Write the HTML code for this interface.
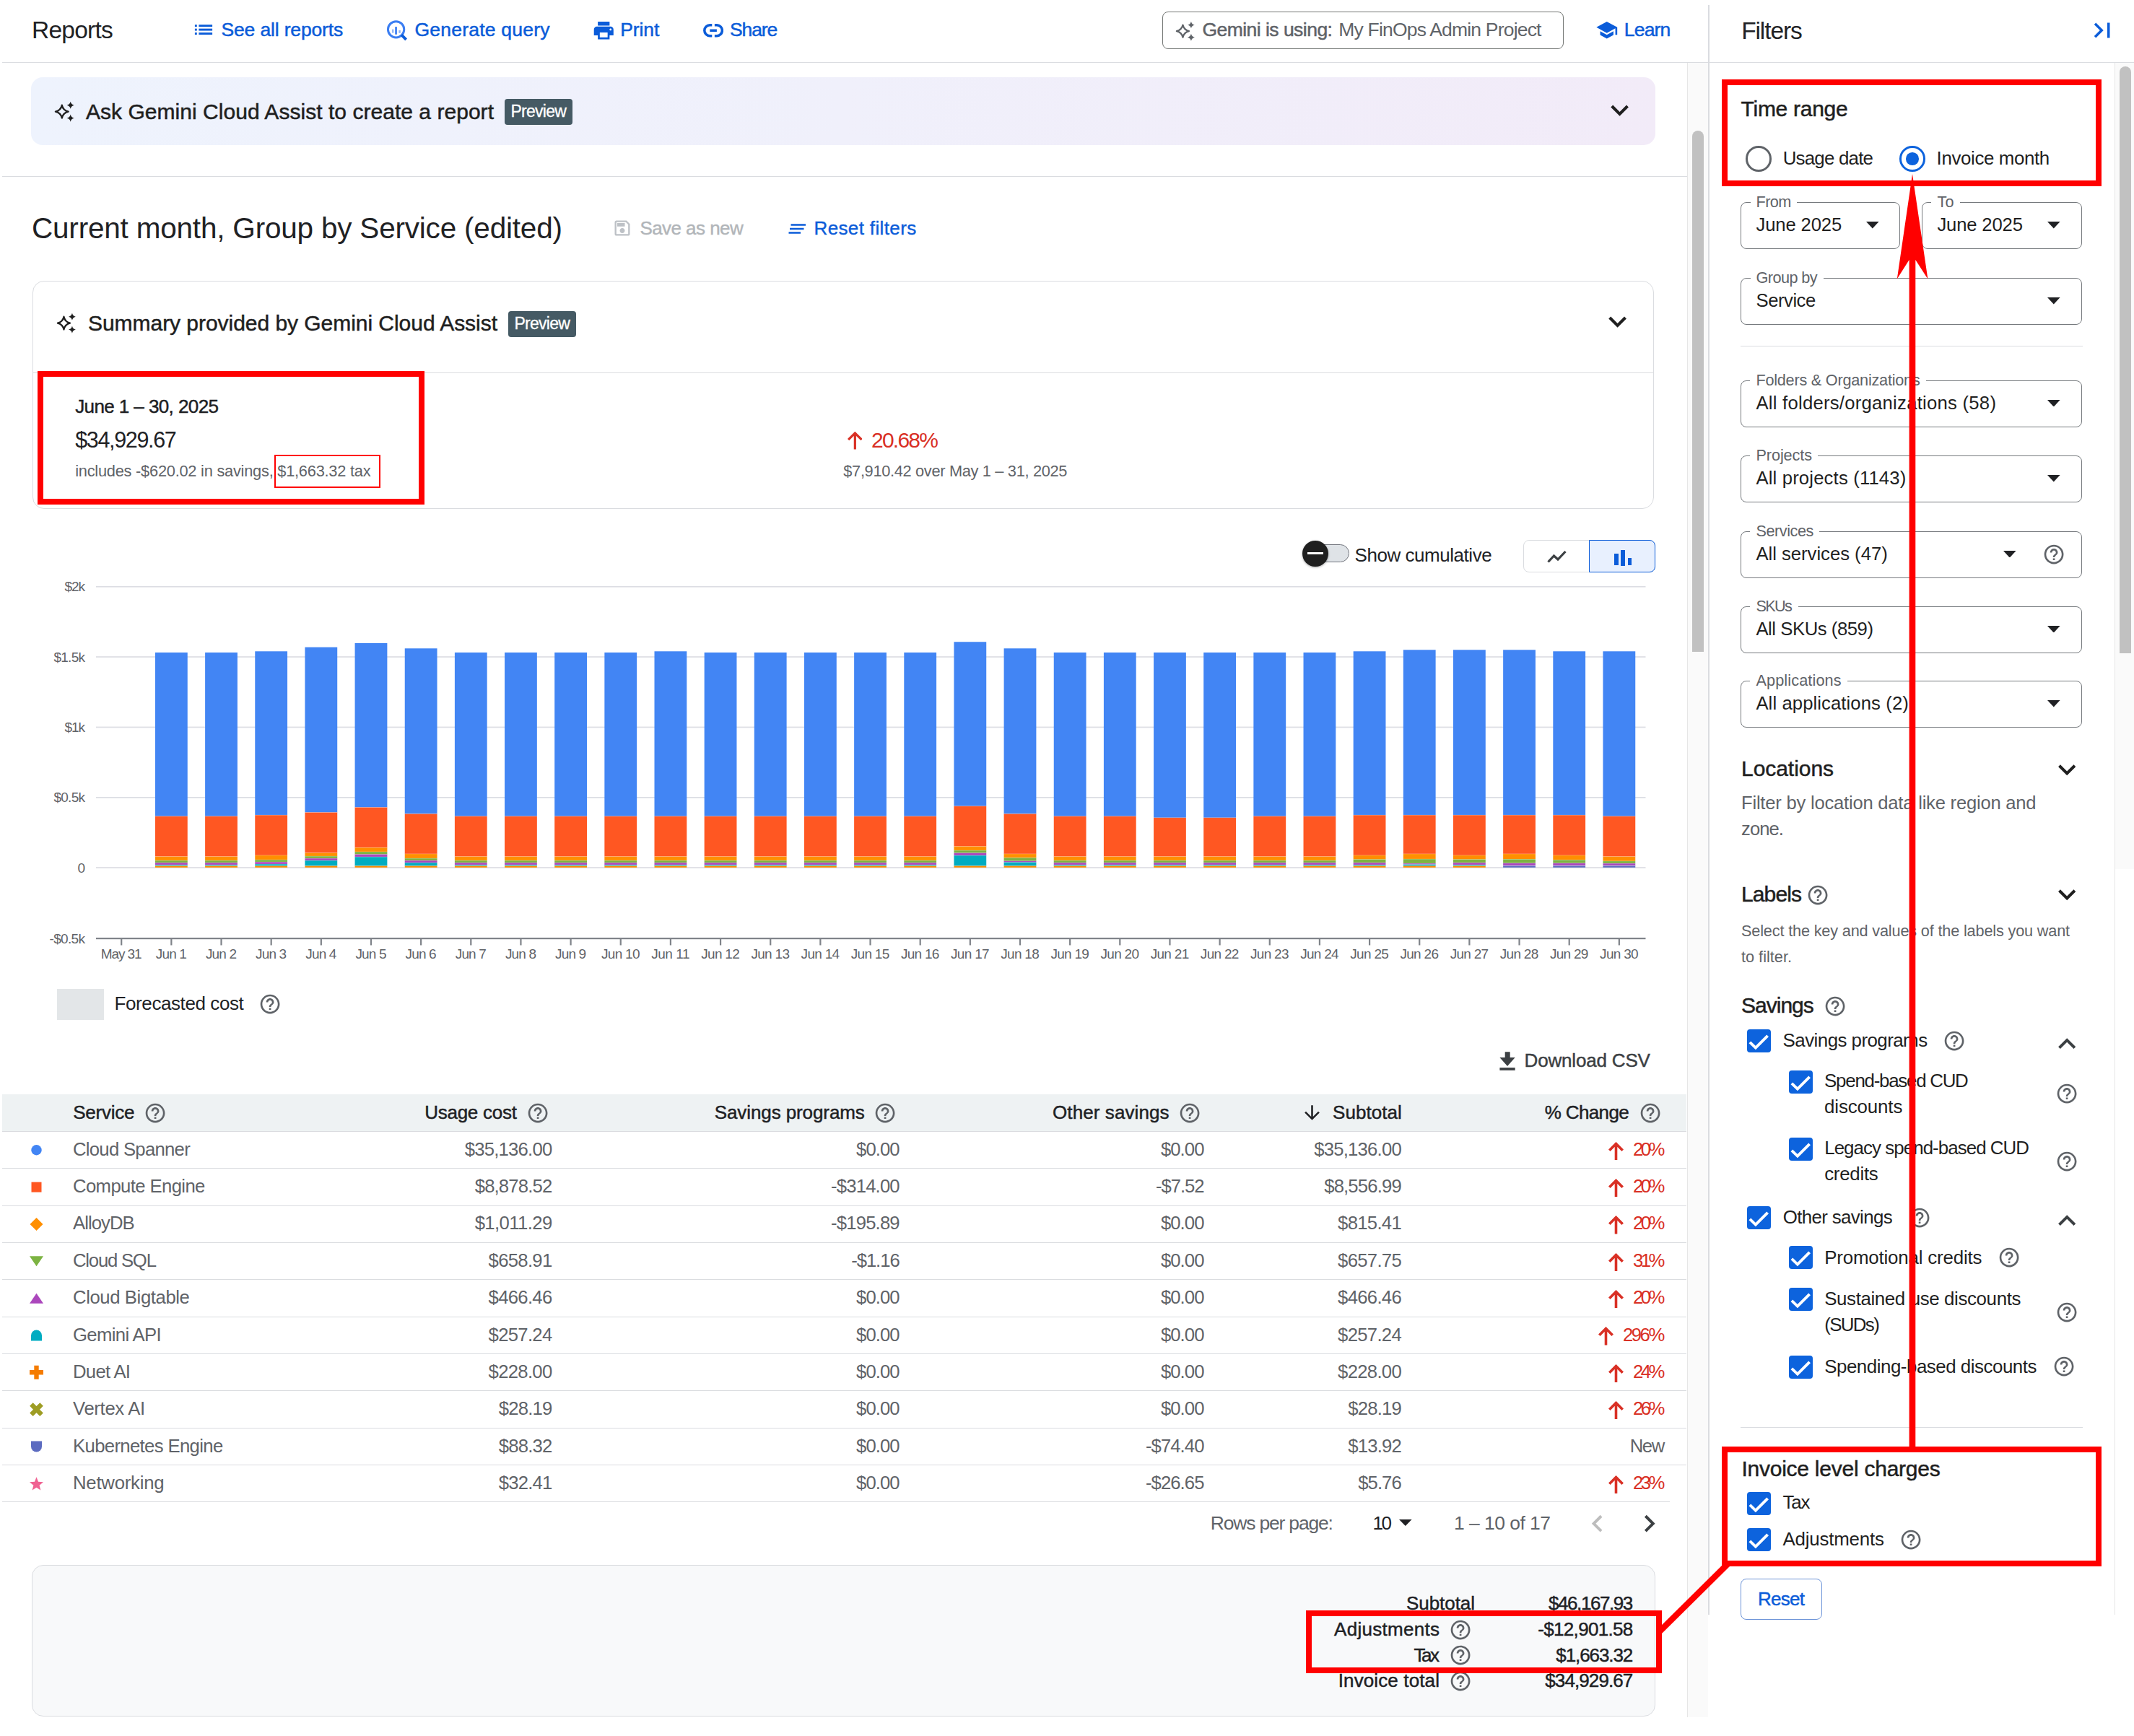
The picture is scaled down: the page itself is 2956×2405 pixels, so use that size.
<!DOCTYPE html><html><head><meta charset="utf-8"><title>Reports</title><style>*{margin:0;padding:0;box-sizing:border-box}html,body{width:2956px;height:2405px;overflow:hidden;background:#fff}body{position:relative;font-family:"Liberation Sans",sans-serif}.t{position:absolute;white-space:nowrap}.a{position:absolute;display:block}</style></head><body><div class="a" style="left:3.00px;top:86.00px;width:2953.00px;height:1.00px;background:#dadce0;"></div>
<div class="a" style="left:2366.00px;top:7.00px;width:2.00px;height:2230.00px;background:#dadce0;"></div>
<div class="t" style="left:44.00px;top:25px;font-size:33.5px;line-height:33.5px;color:#202124;letter-spacing:-0.756px;">Reports</div>
<svg class="a" style="left:0.00px;top:0.00px;width:2956.00px;height:100.00px;" viewBox="0 0 2956 100" preserveAspectRatio="none"><rect x="269.9" y="34.2" width="2.9" height="2.9" fill="#0b5cd9"/><rect x="275.4" y="34.2" width="18.7" height="2.9" fill="#0b5cd9"/><rect x="269.9" y="39.65" width="2.9" height="2.9" fill="#0b5cd9"/><rect x="275.4" y="39.65" width="18.7" height="2.9" fill="#0b5cd9"/><rect x="269.9" y="45.1" width="2.9" height="2.9" fill="#0b5cd9"/><rect x="275.4" y="45.1" width="18.7" height="2.9" fill="#0b5cd9"/></svg>
<div class="t" style="left:306.50px;top:28px;font-size:26.5px;line-height:26.5px;color:#0b5cd9;letter-spacing:-0.154px;-webkit-text-stroke:0.5px #0b5cd9;">See all reports</div>
<svg class="a" style="left:0.00px;top:0.00px;width:2956.00px;height:100.00px;" viewBox="0 0 2956 100" preserveAspectRatio="none"><circle cx="548.6" cy="40.8" r="11.15" fill="none" stroke="#3b7ef2" stroke-width="3"/><path d="M556.2 48.4 L562.6 54.8" stroke="#0b5cd9" stroke-width="4"/><rect x="547.2" y="37.1" width="2.7" height="10.6" fill="#3b7ef2"/><rect x="543.1" y="40.6" width="2.2" height="5" fill="#8db3f5"/><rect x="552.4" y="42" width="2.4" height="3.8" fill="#8db3f5"/></svg>
<div class="t" style="left:574.50px;top:28px;font-size:26.5px;line-height:26.5px;color:#0b5cd9;letter-spacing:0.217px;-webkit-text-stroke:0.5px #0b5cd9;">Generate query</div>
<svg class="a" style="left:820.00px;top:25.70px;width:32.50px;height:32.50px" viewBox="0 0 24 24"><path fill="#0b5cd9" d="M19 8H5c-1.66 0-3 1.34-3 3v6h4v4h12v-4h4v-6c0-1.66-1.34-3-3-3zm-3 11H8v-5h8v5zm3-7c-.55 0-1-.45-1-1s.45-1 1-1 1 .45 1 1-.45 1-1 1zm-1-9H6v4h12V3z"/></svg>
<div class="t" style="left:859.30px;top:28px;font-size:26.5px;line-height:26.5px;color:#0b5cd9;letter-spacing:-0.114px;-webkit-text-stroke:0.5px #0b5cd9;">Print</div>
<svg class="a" style="left:974.00px;top:33.00px;width:28.20px;height:18.50px;" viewBox="0 0 28.2 18.5" preserveAspectRatio="none"><path d="M12.3 1.8H9.25A7.45 7.45 0 0 0 9.25 16.7H12.3M15.9 1.8H18.95A7.45 7.45 0 0 1 18.95 16.7H15.9M9.3 9.25H18.9" fill="none" stroke="#0b5cd9" stroke-width="3.5"/></svg>
<div class="t" style="left:1011.00px;top:28px;font-size:26.5px;line-height:26.5px;color:#0b5cd9;letter-spacing:-1.122px;-webkit-text-stroke:0.5px #0b5cd9;">Share</div>
<div class="a" style="left:1609.50px;top:16.00px;width:556.00px;height:51.50px;border:1.5px solid #747775;border-radius:8px;"></div>
<svg class="a" style="left:1628.60px;top:30.00px;width:27.00px;height:27.00px;overflow:visible" viewBox="0 0 28 28" preserveAspectRatio="none"><path fill="none" stroke="#5f6368" stroke-width="2.3" stroke-linejoin="round" d="M9.8 4.699999999999999 Q11.4 12.0 18.700000000000003 13.6 Q11.4 15.2 9.8 22.5 Q8.200000000000001 15.2 0.9000000000000004 13.6 Q8.200000000000001 12.0 9.8 4.699999999999999Z"/><path fill="#5f6368" d="M21.7 -0.2999999999999998 Q22.599999999999998 3.8000000000000003 26.7 4.7 Q22.599999999999998 5.6000000000000005 21.7 9.7 Q20.8 5.6000000000000005 16.7 4.7 Q20.8 3.8000000000000003 21.7 -0.2999999999999998Z"/><path fill="#5f6368" d="M21.7 17.400000000000002 Q22.599999999999998 21.700000000000003 26.9 22.6 Q22.599999999999998 23.5 21.7 27.8 Q20.8 23.5 16.5 22.6 Q20.8 21.700000000000003 21.7 17.400000000000002Z"/></svg>
<div class="t" style="left:1665.40px;top:28px;font-size:26.5px;line-height:26.5px;color:#5f6368;letter-spacing:-0.530px;-webkit-text-stroke:0.5px #5f6368;">Gemini is using:</div>
<div class="t" style="left:1854.30px;top:28px;font-size:26.5px;line-height:26.5px;color:#5f6368;letter-spacing:-0.808px;">My FinOps Admin Project</div>
<svg class="a" style="left:2209.70px;top:25.70px;width:31.50px;height:31.50px" viewBox="0 0 24 24"><path fill="#0b5cd9" d="M5 13.18v4L12 21l7-3.82v-4L12 17l-7-3.82zM12 3L1 9l11 6 9-4.91V17h2V9L12 3z"/></svg>
<div class="t" style="left:2249.80px;top:28px;font-size:26.5px;line-height:26.5px;color:#0b5cd9;letter-spacing:-0.818px;-webkit-text-stroke:0.5px #0b5cd9;">Learn</div>
<div class="t" style="left:2412.20px;top:26px;font-size:33.5px;line-height:33.5px;color:#202124;letter-spacing:-1.117px;">Filters</div>
<svg class="a" style="left:2890.90px;top:20.50px;width:42.00px;height:42.00px" viewBox="0 0 24 24"><path fill="#0b5cd9" d="M5.59 7.41L10.18 12l-4.59 4.59L7 18l6-6-6-6zM16 6h2v12h-2z"/></svg>
<div class="a" style="left:2337.00px;top:87.00px;width:29.00px;height:2292.00px;background:#fafafa;border-left:1.5px solid #e6e6e6;"></div>
<div class="a" style="left:2344.00px;top:180.50px;width:16.00px;height:722.50px;background:#c1c1c1;border-radius:8px 8px 0 0;"></div>
<div class="a" style="left:2928.50px;top:87.00px;width:27.50px;height:1117.00px;background:#fafafa;"></div>
<div class="a" style="left:2928.50px;top:87.00px;width:1.50px;height:2150.00px;background:#e6e6e6;"></div>
<div class="a" style="left:2936.00px;top:92.00px;width:16.00px;height:812.50px;background:#c1c1c1;border-radius:8px 8px 0 0;"></div>
<div class="a" style="left:43.00px;top:107.00px;width:2249.50px;height:94.00px;border-radius:16px;background:linear-gradient(90deg,#eef3fd 0%,#f0f0fb 50%,#f2ebf8 100%);"></div>
<svg class="a" style="left:75.70px;top:140.50px;width:28.00px;height:28.00px;overflow:visible" viewBox="0 0 28 28" preserveAspectRatio="none"><path fill="none" stroke="#1f1f1f" stroke-width="2.3" stroke-linejoin="round" d="M9.8 4.699999999999999 Q11.4 12.0 18.700000000000003 13.6 Q11.4 15.2 9.8 22.5 Q8.200000000000001 15.2 0.9000000000000004 13.6 Q8.200000000000001 12.0 9.8 4.699999999999999Z"/><path fill="#1f1f1f" d="M21.7 -0.2999999999999998 Q22.599999999999998 3.8000000000000003 26.7 4.7 Q22.599999999999998 5.6000000000000005 21.7 9.7 Q20.8 5.6000000000000005 16.7 4.7 Q20.8 3.8000000000000003 21.7 -0.2999999999999998Z"/><path fill="#1f1f1f" d="M21.7 17.400000000000002 Q22.599999999999998 21.700000000000003 26.9 22.6 Q22.599999999999998 23.5 21.7 27.8 Q20.8 23.5 16.5 22.6 Q20.8 21.700000000000003 21.7 17.400000000000002Z"/></svg>
<div class="t" style="left:119.00px;top:140px;font-size:30px;line-height:30px;color:#1f1f1f;letter-spacing:0.034px;-webkit-text-stroke:0.5px #1f1f1f;">Ask Gemini Cloud Assist to create a report</div>
<div class="a" style="left:699.00px;top:137.00px;width:93.70px;height:35.60px;background:#455a64;border-radius:4px;"></div>
<div class="t" style="left:707.50px;top:143px;font-size:23px;line-height:23px;color:#fff;letter-spacing:-0.730px;-webkit-text-stroke:0.3px #fff;">Preview</div>
<svg class="a" style="left:2218.70px;top:128.40px;width:49.20px;height:49.20px" viewBox="0 0 24 24"><path fill="#1f1f1f" d="M16.59 8.59L12 13.17 7.41 8.59 6 10l6 6 6-6z"/></svg>
<div class="a" style="left:3.00px;top:244.00px;width:2334.00px;height:1.00px;background:#dadce0;"></div>
<div class="t" style="left:44.00px;top:296px;font-size:40.5px;line-height:40.5px;color:#202124;letter-spacing:-0.202px;">Current month, Group by Service (edited)</div>
<svg class="a" style="left:848.00px;top:301.50px;width:28.00px;height:28.00px" viewBox="0 0 24 24"><path fill="#bdc1c6" d="M17 3H5c-1.11 0-2 .9-2 2v14c0 1.1.89 2 2 2h14c1.1 0 2-.9 2-2V7l-4-4zm2 16H5V5h11.17L19 7.83V19zm-7-7c-1.66 0-3 1.34-3 3s1.34 3 3 3 3-1.34 3-3-1.34-3-3-3zM6 6h9v4H6z"/></svg>
<div class="t" style="left:886.40px;top:303px;font-size:26px;line-height:26px;color:#b1b5b9;letter-spacing:-0.551px;-webkit-text-stroke:0.4px #b1b5b9;">Save as new</div>
<svg class="a" style="left:1092.00px;top:310.00px;width:25.00px;height:14.00px;" viewBox="0 0 25 14" preserveAspectRatio="none"><path d="M3.5 1.5H24M2 7H21.5M0.5 12.5H17" stroke="#0b5cd9" stroke-width="2.6"/></svg>
<div class="t" style="left:1127.50px;top:303px;font-size:26px;line-height:26px;color:#0b5cd9;letter-spacing:0.368px;-webkit-text-stroke:0.4px #0b5cd9;">Reset filters</div>
<div class="a" style="left:45.00px;top:388.50px;width:2246.00px;height:316.50px;border:1.5px solid #dadce0;border-radius:16px;"></div>
<svg class="a" style="left:78.70px;top:433.50px;width:27.00px;height:28.00px;overflow:visible" viewBox="0 0 28 28" preserveAspectRatio="none"><path fill="none" stroke="#1f1f1f" stroke-width="2.3" stroke-linejoin="round" d="M9.8 4.699999999999999 Q11.4 12.0 18.700000000000003 13.6 Q11.4 15.2 9.8 22.5 Q8.200000000000001 15.2 0.9000000000000004 13.6 Q8.200000000000001 12.0 9.8 4.699999999999999Z"/><path fill="#1f1f1f" d="M21.7 -0.2999999999999998 Q22.599999999999998 3.8000000000000003 26.7 4.7 Q22.599999999999998 5.6000000000000005 21.7 9.7 Q20.8 5.6000000000000005 16.7 4.7 Q20.8 3.8000000000000003 21.7 -0.2999999999999998Z"/><path fill="#1f1f1f" d="M21.7 17.400000000000002 Q22.599999999999998 21.700000000000003 26.9 22.6 Q22.599999999999998 23.5 21.7 27.8 Q20.8 23.5 16.5 22.6 Q20.8 21.700000000000003 21.7 17.400000000000002Z"/></svg>
<div class="t" style="left:122.00px;top:433px;font-size:30px;line-height:30px;color:#1f1f1f;letter-spacing:-0.041px;-webkit-text-stroke:0.5px #1f1f1f;">Summary provided by Gemini Cloud Assist</div>
<div class="a" style="left:704.00px;top:431.00px;width:94.00px;height:35.80px;background:#455a64;border-radius:4px;"></div>
<div class="t" style="left:712.50px;top:437px;font-size:23px;line-height:23px;color:#fff;letter-spacing:-0.730px;-webkit-text-stroke:0.3px #fff;">Preview</div>
<svg class="a" style="left:2215.70px;top:421.00px;width:49.20px;height:49.20px" viewBox="0 0 24 24"><path fill="#1f1f1f" d="M16.59 8.59L12 13.17 7.41 8.59 6 10l6 6 6-6z"/></svg>
<div class="a" style="left:46.00px;top:515.50px;width:2244.00px;height:1.50px;background:#dadce0;"></div>
<div class="t" style="left:104.20px;top:550px;font-size:26px;line-height:26px;color:#202124;letter-spacing:-0.587px;-webkit-text-stroke:0.45px #202124;">June 1 – 30, 2025</div>
<div class="t" style="left:104.20px;top:594px;font-size:30.5px;line-height:30.5px;color:#202124;letter-spacing:-1.339px;">$34,929.67</div>
<div class="t" style="left:104.20px;top:642px;font-size:21.8px;line-height:21.8px;color:#5f6368;letter-spacing:-0.236px;">includes -$620.02 in savings, $1,663.32 tax</div>
<div class="a" style="left:52.00px;top:514.00px;width:536.00px;height:185.00px;border:8px solid #ff0000;"></div>
<div class="a" style="left:380.00px;top:630.00px;width:147.00px;height:45.50px;border:2px solid #ff0000;"></div>
<svg class="a" style="left:1173.70px;top:598.30px;width:20.70px;height:24.40px;" viewBox="0 0 20.7 24.4" preserveAspectRatio="none"><path d="M10.35 24.4V2M1.1 11.2L10.35 2L19.6 11.2" fill="none" stroke="#d93025" stroke-width="3.2"/></svg>
<div class="t" style="left:1207.00px;top:595px;font-size:30px;line-height:30px;color:#d93025;letter-spacing:-1.755px;">20.68%</div>
<div class="t" style="left:1168.30px;top:642px;font-size:21.8px;line-height:21.8px;color:#5f6368;letter-spacing:-0.326px;">$7,910.42 over May 1 – 31, 2025</div>
<div class="a" style="left:1818.70px;top:754.00px;width:50.30px;height:25.00px;background:#dfe3e7;border:1.5px solid #74777f;border-radius:13px;"></div>
<div class="a" style="left:1803.90px;top:748.90px;width:35.80px;height:35.80px;background:#1f1f1f;border-radius:50%;box-shadow:0 1px 3px rgba(0,0,0,.35);"></div>
<div class="a" style="left:1811.00px;top:765.30px;width:22.00px;height:3.20px;background:#fff;"></div>
<div class="t" style="left:1876.50px;top:756px;font-size:26px;line-height:26px;color:#202124;letter-spacing:-0.454px;">Show cumulative</div>
<div class="a" style="left:2110.00px;top:748.00px;width:183.00px;height:44.50px;border:1.5px solid #dadce0;border-radius:8px;"></div>
<div class="a" style="left:2200.50px;top:748.00px;width:92.50px;height:44.50px;border:1.5px solid #0b5cd9;border-radius:0 8px 8px 0;background:#e8f0fe;"></div>
<svg class="a" style="left:2143.00px;top:762.00px;width:27.00px;height:18.00px;" viewBox="0 0 27 18" preserveAspectRatio="none"><path d="M1.5 16.5 L9.5 8 L15 13 L25.5 2" fill="none" stroke="#3c4043" stroke-width="3.2"/></svg>
<div class="a" style="left:2236.40px;top:767.30px;width:5.30px;height:16.20px;background:#0b5cd9;"></div>
<div class="a" style="left:2245.30px;top:762.00px;width:5.50px;height:21.50px;background:#0b5cd9;"></div>
<div class="a" style="left:2254.80px;top:772.80px;width:5.50px;height:10.70px;background:#0b5cd9;"></div>
<svg class="a" style="left:0;top:0;width:2956px;height:2405px;pointer-events:none" viewBox="0 0 2956 2405"><rect x="133" y="811.90" width="2146.5" height="1.7" fill="#dcdde3"/><rect x="133" y="909.20" width="2146.5" height="1.7" fill="#dcdde3"/><rect x="133" y="1006.60" width="2146.5" height="1.7" fill="#dcdde3"/><rect x="133" y="1104.00" width="2146.5" height="1.7" fill="#dcdde3"/><rect x="133" y="1201.20" width="2146.5" height="1.7" fill="#dcdde3"/><rect x="133" y="1299" width="2146.5" height="2.2" fill="#7f8389"/><rect x="167.10" y="1300" width="2.2" height="9.5" fill="#7f8389"/><rect x="236.25" y="1300" width="2.2" height="9.5" fill="#7f8389"/><rect x="305.41" y="1300" width="2.2" height="9.5" fill="#7f8389"/><rect x="374.56" y="1300" width="2.2" height="9.5" fill="#7f8389"/><rect x="443.72" y="1300" width="2.2" height="9.5" fill="#7f8389"/><rect x="512.87" y="1300" width="2.2" height="9.5" fill="#7f8389"/><rect x="582.03" y="1300" width="2.2" height="9.5" fill="#7f8389"/><rect x="651.19" y="1300" width="2.2" height="9.5" fill="#7f8389"/><rect x="720.34" y="1300" width="2.2" height="9.5" fill="#7f8389"/><rect x="789.50" y="1300" width="2.2" height="9.5" fill="#7f8389"/><rect x="858.65" y="1300" width="2.2" height="9.5" fill="#7f8389"/><rect x="927.80" y="1300" width="2.2" height="9.5" fill="#7f8389"/><rect x="996.96" y="1300" width="2.2" height="9.5" fill="#7f8389"/><rect x="1066.12" y="1300" width="2.2" height="9.5" fill="#7f8389"/><rect x="1135.27" y="1300" width="2.2" height="9.5" fill="#7f8389"/><rect x="1204.43" y="1300" width="2.2" height="9.5" fill="#7f8389"/><rect x="1273.58" y="1300" width="2.2" height="9.5" fill="#7f8389"/><rect x="1342.74" y="1300" width="2.2" height="9.5" fill="#7f8389"/><rect x="1411.89" y="1300" width="2.2" height="9.5" fill="#7f8389"/><rect x="1481.05" y="1300" width="2.2" height="9.5" fill="#7f8389"/><rect x="1550.20" y="1300" width="2.2" height="9.5" fill="#7f8389"/><rect x="1619.36" y="1300" width="2.2" height="9.5" fill="#7f8389"/><rect x="1688.51" y="1300" width="2.2" height="9.5" fill="#7f8389"/><rect x="1757.67" y="1300" width="2.2" height="9.5" fill="#7f8389"/><rect x="1826.82" y="1300" width="2.2" height="9.5" fill="#7f8389"/><rect x="1895.98" y="1300" width="2.2" height="9.5" fill="#7f8389"/><rect x="1965.13" y="1300" width="2.2" height="9.5" fill="#7f8389"/><rect x="2034.29" y="1300" width="2.2" height="9.5" fill="#7f8389"/><rect x="2103.44" y="1300" width="2.2" height="9.5" fill="#7f8389"/><rect x="2172.60" y="1300" width="2.2" height="9.5" fill="#7f8389"/><rect x="2241.75" y="1300" width="2.2" height="9.5" fill="#7f8389"/><rect x="214.95" y="903.96" width="44.8" height="226.86" fill="#4285f4"/><rect x="214.95" y="1130.82" width="44.8" height="55.80" fill="#ff5722"/><rect x="214.95" y="1186.62" width="44.8" height="5.48" fill="#ff8f00"/><rect x="214.95" y="1192.10" width="44.8" height="3.00" fill="#7cb342"/><rect x="214.95" y="1195.10" width="44.8" height="3.00" fill="#ab47bc"/><rect x="214.95" y="1198.10" width="44.8" height="1.50" fill="#00acc1"/><rect x="214.95" y="1199.60" width="44.8" height="2.20" fill="#fb8c00"/><rect x="214.95" y="1130.47" width="44.8" height="0.7" fill="rgba(255,255,255,.3)"/><rect x="214.95" y="1186.27" width="44.8" height="0.7" fill="rgba(255,255,255,.3)"/><rect x="214.95" y="1191.75" width="44.8" height="0.7" fill="rgba(255,255,255,.3)"/><rect x="214.95" y="1194.75" width="44.8" height="0.7" fill="rgba(255,255,255,.3)"/><rect x="214.95" y="1197.75" width="44.8" height="0.7" fill="rgba(255,255,255,.3)"/><rect x="214.95" y="1199.25" width="44.8" height="0.7" fill="rgba(255,255,255,.3)"/><rect x="284.11" y="903.96" width="44.8" height="226.86" fill="#4285f4"/><rect x="284.11" y="1130.82" width="44.8" height="55.80" fill="#ff5722"/><rect x="284.11" y="1186.62" width="44.8" height="5.48" fill="#ff8f00"/><rect x="284.11" y="1192.10" width="44.8" height="3.00" fill="#7cb342"/><rect x="284.11" y="1195.10" width="44.8" height="3.00" fill="#ab47bc"/><rect x="284.11" y="1198.10" width="44.8" height="1.50" fill="#00acc1"/><rect x="284.11" y="1199.60" width="44.8" height="2.20" fill="#fb8c00"/><rect x="284.11" y="1130.47" width="44.8" height="0.7" fill="rgba(255,255,255,.3)"/><rect x="284.11" y="1186.27" width="44.8" height="0.7" fill="rgba(255,255,255,.3)"/><rect x="284.11" y="1191.75" width="44.8" height="0.7" fill="rgba(255,255,255,.3)"/><rect x="284.11" y="1194.75" width="44.8" height="0.7" fill="rgba(255,255,255,.3)"/><rect x="284.11" y="1197.75" width="44.8" height="0.7" fill="rgba(255,255,255,.3)"/><rect x="284.11" y="1199.25" width="44.8" height="0.7" fill="rgba(255,255,255,.3)"/><rect x="353.26" y="902.29" width="44.8" height="226.86" fill="#4285f4"/><rect x="353.26" y="1129.15" width="44.8" height="55.80" fill="#ff5722"/><rect x="353.26" y="1184.94" width="44.8" height="6.16" fill="#ff8f00"/><rect x="353.26" y="1191.10" width="44.8" height="3.00" fill="#7cb342"/><rect x="353.26" y="1194.10" width="44.8" height="3.00" fill="#ab47bc"/><rect x="353.26" y="1197.10" width="44.8" height="2.50" fill="#00acc1"/><rect x="353.26" y="1199.60" width="44.8" height="2.20" fill="#fb8c00"/><rect x="353.26" y="1128.80" width="44.8" height="0.7" fill="rgba(255,255,255,.3)"/><rect x="353.26" y="1184.59" width="44.8" height="0.7" fill="rgba(255,255,255,.3)"/><rect x="353.26" y="1190.75" width="44.8" height="0.7" fill="rgba(255,255,255,.3)"/><rect x="353.26" y="1193.75" width="44.8" height="0.7" fill="rgba(255,255,255,.3)"/><rect x="353.26" y="1196.75" width="44.8" height="0.7" fill="rgba(255,255,255,.3)"/><rect x="353.26" y="1199.25" width="44.8" height="0.7" fill="rgba(255,255,255,.3)"/><rect x="422.42" y="896.61" width="44.8" height="228.87" fill="#4285f4"/><rect x="422.42" y="1125.47" width="44.8" height="56.13" fill="#ff5722"/><rect x="422.42" y="1181.60" width="44.8" height="4.50" fill="#ff8f00"/><rect x="422.42" y="1186.10" width="44.8" height="3.00" fill="#7cb342"/><rect x="422.42" y="1189.10" width="44.8" height="3.00" fill="#ab47bc"/><rect x="422.42" y="1192.10" width="44.8" height="7.50" fill="#00acc1"/><rect x="422.42" y="1199.60" width="44.8" height="2.20" fill="#fb8c00"/><rect x="422.42" y="1125.12" width="44.8" height="0.7" fill="rgba(255,255,255,.3)"/><rect x="422.42" y="1181.25" width="44.8" height="0.7" fill="rgba(255,255,255,.3)"/><rect x="422.42" y="1185.75" width="44.8" height="0.7" fill="rgba(255,255,255,.3)"/><rect x="422.42" y="1188.75" width="44.8" height="0.7" fill="rgba(255,255,255,.3)"/><rect x="422.42" y="1191.75" width="44.8" height="0.7" fill="rgba(255,255,255,.3)"/><rect x="422.42" y="1199.25" width="44.8" height="0.7" fill="rgba(255,255,255,.3)"/><rect x="491.57" y="890.93" width="44.8" height="227.53" fill="#4285f4"/><rect x="491.57" y="1118.46" width="44.8" height="55.80" fill="#ff5722"/><rect x="491.57" y="1174.25" width="44.8" height="5.75" fill="#ff8f00"/><rect x="491.57" y="1180.00" width="44.8" height="3.60" fill="#7cb342"/><rect x="491.57" y="1183.60" width="44.8" height="3.50" fill="#ab47bc"/><rect x="491.57" y="1187.10" width="44.8" height="12.50" fill="#00acc1"/><rect x="491.57" y="1199.60" width="44.8" height="2.20" fill="#fb8c00"/><rect x="491.57" y="1118.11" width="44.8" height="0.7" fill="rgba(255,255,255,.3)"/><rect x="491.57" y="1173.90" width="44.8" height="0.7" fill="rgba(255,255,255,.3)"/><rect x="491.57" y="1179.65" width="44.8" height="0.7" fill="rgba(255,255,255,.3)"/><rect x="491.57" y="1183.25" width="44.8" height="0.7" fill="rgba(255,255,255,.3)"/><rect x="491.57" y="1186.75" width="44.8" height="0.7" fill="rgba(255,255,255,.3)"/><rect x="491.57" y="1199.25" width="44.8" height="0.7" fill="rgba(255,255,255,.3)"/><rect x="560.73" y="898.28" width="44.8" height="229.20" fill="#4285f4"/><rect x="560.73" y="1127.48" width="44.8" height="55.46" fill="#ff5722"/><rect x="560.73" y="1182.94" width="44.8" height="6.16" fill="#ff8f00"/><rect x="560.73" y="1189.10" width="44.8" height="3.00" fill="#7cb342"/><rect x="560.73" y="1192.10" width="44.8" height="3.00" fill="#ab47bc"/><rect x="560.73" y="1195.10" width="44.8" height="4.50" fill="#00acc1"/><rect x="560.73" y="1199.60" width="44.8" height="2.20" fill="#fb8c00"/><rect x="560.73" y="1127.13" width="44.8" height="0.7" fill="rgba(255,255,255,.3)"/><rect x="560.73" y="1182.59" width="44.8" height="0.7" fill="rgba(255,255,255,.3)"/><rect x="560.73" y="1188.75" width="44.8" height="0.7" fill="rgba(255,255,255,.3)"/><rect x="560.73" y="1191.75" width="44.8" height="0.7" fill="rgba(255,255,255,.3)"/><rect x="560.73" y="1194.75" width="44.8" height="0.7" fill="rgba(255,255,255,.3)"/><rect x="560.73" y="1199.25" width="44.8" height="0.7" fill="rgba(255,255,255,.3)"/><rect x="629.89" y="903.96" width="44.8" height="226.86" fill="#4285f4"/><rect x="629.89" y="1130.82" width="44.8" height="55.80" fill="#ff5722"/><rect x="629.89" y="1186.62" width="44.8" height="5.48" fill="#ff8f00"/><rect x="629.89" y="1192.10" width="44.8" height="3.00" fill="#7cb342"/><rect x="629.89" y="1195.10" width="44.8" height="3.00" fill="#ab47bc"/><rect x="629.89" y="1198.10" width="44.8" height="1.50" fill="#00acc1"/><rect x="629.89" y="1199.60" width="44.8" height="2.20" fill="#fb8c00"/><rect x="629.89" y="1130.47" width="44.8" height="0.7" fill="rgba(255,255,255,.3)"/><rect x="629.89" y="1186.27" width="44.8" height="0.7" fill="rgba(255,255,255,.3)"/><rect x="629.89" y="1191.75" width="44.8" height="0.7" fill="rgba(255,255,255,.3)"/><rect x="629.89" y="1194.75" width="44.8" height="0.7" fill="rgba(255,255,255,.3)"/><rect x="629.89" y="1197.75" width="44.8" height="0.7" fill="rgba(255,255,255,.3)"/><rect x="629.89" y="1199.25" width="44.8" height="0.7" fill="rgba(255,255,255,.3)"/><rect x="699.04" y="903.96" width="44.8" height="226.86" fill="#4285f4"/><rect x="699.04" y="1130.82" width="44.8" height="55.80" fill="#ff5722"/><rect x="699.04" y="1186.62" width="44.8" height="5.48" fill="#ff8f00"/><rect x="699.04" y="1192.10" width="44.8" height="3.00" fill="#7cb342"/><rect x="699.04" y="1195.10" width="44.8" height="3.00" fill="#ab47bc"/><rect x="699.04" y="1198.10" width="44.8" height="1.50" fill="#00acc1"/><rect x="699.04" y="1199.60" width="44.8" height="2.20" fill="#fb8c00"/><rect x="699.04" y="1130.47" width="44.8" height="0.7" fill="rgba(255,255,255,.3)"/><rect x="699.04" y="1186.27" width="44.8" height="0.7" fill="rgba(255,255,255,.3)"/><rect x="699.04" y="1191.75" width="44.8" height="0.7" fill="rgba(255,255,255,.3)"/><rect x="699.04" y="1194.75" width="44.8" height="0.7" fill="rgba(255,255,255,.3)"/><rect x="699.04" y="1197.75" width="44.8" height="0.7" fill="rgba(255,255,255,.3)"/><rect x="699.04" y="1199.25" width="44.8" height="0.7" fill="rgba(255,255,255,.3)"/><rect x="768.20" y="903.96" width="44.8" height="226.86" fill="#4285f4"/><rect x="768.20" y="1130.82" width="44.8" height="55.80" fill="#ff5722"/><rect x="768.20" y="1186.62" width="44.8" height="5.48" fill="#ff8f00"/><rect x="768.20" y="1192.10" width="44.8" height="3.00" fill="#7cb342"/><rect x="768.20" y="1195.10" width="44.8" height="3.00" fill="#ab47bc"/><rect x="768.20" y="1198.10" width="44.8" height="1.50" fill="#00acc1"/><rect x="768.20" y="1199.60" width="44.8" height="2.20" fill="#fb8c00"/><rect x="768.20" y="1130.47" width="44.8" height="0.7" fill="rgba(255,255,255,.3)"/><rect x="768.20" y="1186.27" width="44.8" height="0.7" fill="rgba(255,255,255,.3)"/><rect x="768.20" y="1191.75" width="44.8" height="0.7" fill="rgba(255,255,255,.3)"/><rect x="768.20" y="1194.75" width="44.8" height="0.7" fill="rgba(255,255,255,.3)"/><rect x="768.20" y="1197.75" width="44.8" height="0.7" fill="rgba(255,255,255,.3)"/><rect x="768.20" y="1199.25" width="44.8" height="0.7" fill="rgba(255,255,255,.3)"/><rect x="837.35" y="903.96" width="44.8" height="226.86" fill="#4285f4"/><rect x="837.35" y="1130.82" width="44.8" height="55.80" fill="#ff5722"/><rect x="837.35" y="1186.62" width="44.8" height="5.48" fill="#ff8f00"/><rect x="837.35" y="1192.10" width="44.8" height="3.00" fill="#7cb342"/><rect x="837.35" y="1195.10" width="44.8" height="3.00" fill="#ab47bc"/><rect x="837.35" y="1198.10" width="44.8" height="1.50" fill="#00acc1"/><rect x="837.35" y="1199.60" width="44.8" height="2.20" fill="#fb8c00"/><rect x="837.35" y="1130.47" width="44.8" height="0.7" fill="rgba(255,255,255,.3)"/><rect x="837.35" y="1186.27" width="44.8" height="0.7" fill="rgba(255,255,255,.3)"/><rect x="837.35" y="1191.75" width="44.8" height="0.7" fill="rgba(255,255,255,.3)"/><rect x="837.35" y="1194.75" width="44.8" height="0.7" fill="rgba(255,255,255,.3)"/><rect x="837.35" y="1197.75" width="44.8" height="0.7" fill="rgba(255,255,255,.3)"/><rect x="837.35" y="1199.25" width="44.8" height="0.7" fill="rgba(255,255,255,.3)"/><rect x="906.50" y="902.29" width="44.8" height="228.53" fill="#4285f4"/><rect x="906.50" y="1130.82" width="44.8" height="55.80" fill="#ff5722"/><rect x="906.50" y="1186.62" width="44.8" height="5.48" fill="#ff8f00"/><rect x="906.50" y="1192.10" width="44.8" height="3.00" fill="#7cb342"/><rect x="906.50" y="1195.10" width="44.8" height="3.00" fill="#ab47bc"/><rect x="906.50" y="1198.10" width="44.8" height="1.50" fill="#00acc1"/><rect x="906.50" y="1199.60" width="44.8" height="2.20" fill="#fb8c00"/><rect x="906.50" y="1130.47" width="44.8" height="0.7" fill="rgba(255,255,255,.3)"/><rect x="906.50" y="1186.27" width="44.8" height="0.7" fill="rgba(255,255,255,.3)"/><rect x="906.50" y="1191.75" width="44.8" height="0.7" fill="rgba(255,255,255,.3)"/><rect x="906.50" y="1194.75" width="44.8" height="0.7" fill="rgba(255,255,255,.3)"/><rect x="906.50" y="1197.75" width="44.8" height="0.7" fill="rgba(255,255,255,.3)"/><rect x="906.50" y="1199.25" width="44.8" height="0.7" fill="rgba(255,255,255,.3)"/><rect x="975.66" y="903.96" width="44.8" height="226.86" fill="#4285f4"/><rect x="975.66" y="1130.82" width="44.8" height="55.80" fill="#ff5722"/><rect x="975.66" y="1186.62" width="44.8" height="5.48" fill="#ff8f00"/><rect x="975.66" y="1192.10" width="44.8" height="3.00" fill="#7cb342"/><rect x="975.66" y="1195.10" width="44.8" height="3.00" fill="#ab47bc"/><rect x="975.66" y="1198.10" width="44.8" height="1.50" fill="#00acc1"/><rect x="975.66" y="1199.60" width="44.8" height="2.20" fill="#fb8c00"/><rect x="975.66" y="1130.47" width="44.8" height="0.7" fill="rgba(255,255,255,.3)"/><rect x="975.66" y="1186.27" width="44.8" height="0.7" fill="rgba(255,255,255,.3)"/><rect x="975.66" y="1191.75" width="44.8" height="0.7" fill="rgba(255,255,255,.3)"/><rect x="975.66" y="1194.75" width="44.8" height="0.7" fill="rgba(255,255,255,.3)"/><rect x="975.66" y="1197.75" width="44.8" height="0.7" fill="rgba(255,255,255,.3)"/><rect x="975.66" y="1199.25" width="44.8" height="0.7" fill="rgba(255,255,255,.3)"/><rect x="1044.81" y="903.96" width="44.8" height="226.86" fill="#4285f4"/><rect x="1044.81" y="1130.82" width="44.8" height="55.80" fill="#ff5722"/><rect x="1044.81" y="1186.62" width="44.8" height="5.48" fill="#ff8f00"/><rect x="1044.81" y="1192.10" width="44.8" height="3.00" fill="#7cb342"/><rect x="1044.81" y="1195.10" width="44.8" height="3.00" fill="#ab47bc"/><rect x="1044.81" y="1198.10" width="44.8" height="1.50" fill="#00acc1"/><rect x="1044.81" y="1199.60" width="44.8" height="2.20" fill="#fb8c00"/><rect x="1044.81" y="1130.47" width="44.8" height="0.7" fill="rgba(255,255,255,.3)"/><rect x="1044.81" y="1186.27" width="44.8" height="0.7" fill="rgba(255,255,255,.3)"/><rect x="1044.81" y="1191.75" width="44.8" height="0.7" fill="rgba(255,255,255,.3)"/><rect x="1044.81" y="1194.75" width="44.8" height="0.7" fill="rgba(255,255,255,.3)"/><rect x="1044.81" y="1197.75" width="44.8" height="0.7" fill="rgba(255,255,255,.3)"/><rect x="1044.81" y="1199.25" width="44.8" height="0.7" fill="rgba(255,255,255,.3)"/><rect x="1113.97" y="903.96" width="44.8" height="226.86" fill="#4285f4"/><rect x="1113.97" y="1130.82" width="44.8" height="55.80" fill="#ff5722"/><rect x="1113.97" y="1186.62" width="44.8" height="5.48" fill="#ff8f00"/><rect x="1113.97" y="1192.10" width="44.8" height="3.00" fill="#7cb342"/><rect x="1113.97" y="1195.10" width="44.8" height="3.00" fill="#ab47bc"/><rect x="1113.97" y="1198.10" width="44.8" height="1.50" fill="#00acc1"/><rect x="1113.97" y="1199.60" width="44.8" height="2.20" fill="#fb8c00"/><rect x="1113.97" y="1130.47" width="44.8" height="0.7" fill="rgba(255,255,255,.3)"/><rect x="1113.97" y="1186.27" width="44.8" height="0.7" fill="rgba(255,255,255,.3)"/><rect x="1113.97" y="1191.75" width="44.8" height="0.7" fill="rgba(255,255,255,.3)"/><rect x="1113.97" y="1194.75" width="44.8" height="0.7" fill="rgba(255,255,255,.3)"/><rect x="1113.97" y="1197.75" width="44.8" height="0.7" fill="rgba(255,255,255,.3)"/><rect x="1113.97" y="1199.25" width="44.8" height="0.7" fill="rgba(255,255,255,.3)"/><rect x="1183.12" y="903.96" width="44.8" height="226.86" fill="#4285f4"/><rect x="1183.12" y="1130.82" width="44.8" height="55.80" fill="#ff5722"/><rect x="1183.12" y="1186.62" width="44.8" height="5.48" fill="#ff8f00"/><rect x="1183.12" y="1192.10" width="44.8" height="3.00" fill="#7cb342"/><rect x="1183.12" y="1195.10" width="44.8" height="3.00" fill="#ab47bc"/><rect x="1183.12" y="1198.10" width="44.8" height="1.50" fill="#00acc1"/><rect x="1183.12" y="1199.60" width="44.8" height="2.20" fill="#fb8c00"/><rect x="1183.12" y="1130.47" width="44.8" height="0.7" fill="rgba(255,255,255,.3)"/><rect x="1183.12" y="1186.27" width="44.8" height="0.7" fill="rgba(255,255,255,.3)"/><rect x="1183.12" y="1191.75" width="44.8" height="0.7" fill="rgba(255,255,255,.3)"/><rect x="1183.12" y="1194.75" width="44.8" height="0.7" fill="rgba(255,255,255,.3)"/><rect x="1183.12" y="1197.75" width="44.8" height="0.7" fill="rgba(255,255,255,.3)"/><rect x="1183.12" y="1199.25" width="44.8" height="0.7" fill="rgba(255,255,255,.3)"/><rect x="1252.28" y="903.96" width="44.8" height="226.86" fill="#4285f4"/><rect x="1252.28" y="1130.82" width="44.8" height="55.80" fill="#ff5722"/><rect x="1252.28" y="1186.62" width="44.8" height="5.48" fill="#ff8f00"/><rect x="1252.28" y="1192.10" width="44.8" height="3.00" fill="#7cb342"/><rect x="1252.28" y="1195.10" width="44.8" height="3.00" fill="#ab47bc"/><rect x="1252.28" y="1198.10" width="44.8" height="1.50" fill="#00acc1"/><rect x="1252.28" y="1199.60" width="44.8" height="2.20" fill="#fb8c00"/><rect x="1252.28" y="1130.47" width="44.8" height="0.7" fill="rgba(255,255,255,.3)"/><rect x="1252.28" y="1186.27" width="44.8" height="0.7" fill="rgba(255,255,255,.3)"/><rect x="1252.28" y="1191.75" width="44.8" height="0.7" fill="rgba(255,255,255,.3)"/><rect x="1252.28" y="1194.75" width="44.8" height="0.7" fill="rgba(255,255,255,.3)"/><rect x="1252.28" y="1197.75" width="44.8" height="0.7" fill="rgba(255,255,255,.3)"/><rect x="1252.28" y="1199.25" width="44.8" height="0.7" fill="rgba(255,255,255,.3)"/><rect x="1321.43" y="889.25" width="44.8" height="227.53" fill="#4285f4"/><rect x="1321.43" y="1116.79" width="44.8" height="55.80" fill="#ff5722"/><rect x="1321.43" y="1172.58" width="44.8" height="5.52" fill="#ff8f00"/><rect x="1321.43" y="1178.10" width="44.8" height="3.60" fill="#7cb342"/><rect x="1321.43" y="1181.70" width="44.8" height="3.40" fill="#ab47bc"/><rect x="1321.43" y="1185.10" width="44.8" height="14.50" fill="#00acc1"/><rect x="1321.43" y="1199.60" width="44.8" height="2.20" fill="#fb8c00"/><rect x="1321.43" y="1116.44" width="44.8" height="0.7" fill="rgba(255,255,255,.3)"/><rect x="1321.43" y="1172.23" width="44.8" height="0.7" fill="rgba(255,255,255,.3)"/><rect x="1321.43" y="1177.75" width="44.8" height="0.7" fill="rgba(255,255,255,.3)"/><rect x="1321.43" y="1181.35" width="44.8" height="0.7" fill="rgba(255,255,255,.3)"/><rect x="1321.43" y="1184.75" width="44.8" height="0.7" fill="rgba(255,255,255,.3)"/><rect x="1321.43" y="1199.25" width="44.8" height="0.7" fill="rgba(255,255,255,.3)"/><rect x="1390.59" y="898.28" width="44.8" height="229.20" fill="#4285f4"/><rect x="1390.59" y="1127.48" width="44.8" height="55.46" fill="#ff5722"/><rect x="1390.59" y="1182.94" width="44.8" height="5.36" fill="#ff8f00"/><rect x="1390.59" y="1188.30" width="44.8" height="4.50" fill="#7cb342"/><rect x="1390.59" y="1192.80" width="44.8" height="1.80" fill="#ab47bc"/><rect x="1390.59" y="1194.60" width="44.8" height="5.00" fill="#00acc1"/><rect x="1390.59" y="1199.60" width="44.8" height="2.20" fill="#fb8c00"/><rect x="1390.59" y="1127.13" width="44.8" height="0.7" fill="rgba(255,255,255,.3)"/><rect x="1390.59" y="1182.59" width="44.8" height="0.7" fill="rgba(255,255,255,.3)"/><rect x="1390.59" y="1187.95" width="44.8" height="0.7" fill="rgba(255,255,255,.3)"/><rect x="1390.59" y="1192.45" width="44.8" height="0.7" fill="rgba(255,255,255,.3)"/><rect x="1390.59" y="1194.25" width="44.8" height="0.7" fill="rgba(255,255,255,.3)"/><rect x="1390.59" y="1199.25" width="44.8" height="0.7" fill="rgba(255,255,255,.3)"/><rect x="1459.74" y="903.96" width="44.8" height="226.86" fill="#4285f4"/><rect x="1459.74" y="1130.82" width="44.8" height="55.80" fill="#ff5722"/><rect x="1459.74" y="1186.62" width="44.8" height="5.48" fill="#ff8f00"/><rect x="1459.74" y="1192.10" width="44.8" height="3.00" fill="#7cb342"/><rect x="1459.74" y="1195.10" width="44.8" height="3.00" fill="#ab47bc"/><rect x="1459.74" y="1198.10" width="44.8" height="1.50" fill="#00acc1"/><rect x="1459.74" y="1199.60" width="44.8" height="2.20" fill="#fb8c00"/><rect x="1459.74" y="1130.47" width="44.8" height="0.7" fill="rgba(255,255,255,.3)"/><rect x="1459.74" y="1186.27" width="44.8" height="0.7" fill="rgba(255,255,255,.3)"/><rect x="1459.74" y="1191.75" width="44.8" height="0.7" fill="rgba(255,255,255,.3)"/><rect x="1459.74" y="1194.75" width="44.8" height="0.7" fill="rgba(255,255,255,.3)"/><rect x="1459.74" y="1197.75" width="44.8" height="0.7" fill="rgba(255,255,255,.3)"/><rect x="1459.74" y="1199.25" width="44.8" height="0.7" fill="rgba(255,255,255,.3)"/><rect x="1528.90" y="903.96" width="44.8" height="226.86" fill="#4285f4"/><rect x="1528.90" y="1130.82" width="44.8" height="55.80" fill="#ff5722"/><rect x="1528.90" y="1186.62" width="44.8" height="5.48" fill="#ff8f00"/><rect x="1528.90" y="1192.10" width="44.8" height="3.00" fill="#7cb342"/><rect x="1528.90" y="1195.10" width="44.8" height="3.00" fill="#ab47bc"/><rect x="1528.90" y="1198.10" width="44.8" height="1.50" fill="#00acc1"/><rect x="1528.90" y="1199.60" width="44.8" height="2.20" fill="#fb8c00"/><rect x="1528.90" y="1130.47" width="44.8" height="0.7" fill="rgba(255,255,255,.3)"/><rect x="1528.90" y="1186.27" width="44.8" height="0.7" fill="rgba(255,255,255,.3)"/><rect x="1528.90" y="1191.75" width="44.8" height="0.7" fill="rgba(255,255,255,.3)"/><rect x="1528.90" y="1194.75" width="44.8" height="0.7" fill="rgba(255,255,255,.3)"/><rect x="1528.90" y="1197.75" width="44.8" height="0.7" fill="rgba(255,255,255,.3)"/><rect x="1528.90" y="1199.25" width="44.8" height="0.7" fill="rgba(255,255,255,.3)"/><rect x="1598.06" y="903.96" width="44.8" height="228.87" fill="#4285f4"/><rect x="1598.06" y="1132.82" width="44.8" height="53.79" fill="#ff5722"/><rect x="1598.06" y="1186.62" width="44.8" height="5.48" fill="#ff8f00"/><rect x="1598.06" y="1192.10" width="44.8" height="3.00" fill="#7cb342"/><rect x="1598.06" y="1195.10" width="44.8" height="3.00" fill="#ab47bc"/><rect x="1598.06" y="1198.10" width="44.8" height="1.50" fill="#00acc1"/><rect x="1598.06" y="1199.60" width="44.8" height="2.20" fill="#fb8c00"/><rect x="1598.06" y="1132.47" width="44.8" height="0.7" fill="rgba(255,255,255,.3)"/><rect x="1598.06" y="1186.27" width="44.8" height="0.7" fill="rgba(255,255,255,.3)"/><rect x="1598.06" y="1191.75" width="44.8" height="0.7" fill="rgba(255,255,255,.3)"/><rect x="1598.06" y="1194.75" width="44.8" height="0.7" fill="rgba(255,255,255,.3)"/><rect x="1598.06" y="1197.75" width="44.8" height="0.7" fill="rgba(255,255,255,.3)"/><rect x="1598.06" y="1199.25" width="44.8" height="0.7" fill="rgba(255,255,255,.3)"/><rect x="1667.21" y="903.96" width="44.8" height="228.87" fill="#4285f4"/><rect x="1667.21" y="1132.82" width="44.8" height="53.79" fill="#ff5722"/><rect x="1667.21" y="1186.62" width="44.8" height="5.48" fill="#ff8f00"/><rect x="1667.21" y="1192.10" width="44.8" height="3.00" fill="#7cb342"/><rect x="1667.21" y="1195.10" width="44.8" height="3.00" fill="#ab47bc"/><rect x="1667.21" y="1198.10" width="44.8" height="1.50" fill="#00acc1"/><rect x="1667.21" y="1199.60" width="44.8" height="2.20" fill="#fb8c00"/><rect x="1667.21" y="1132.47" width="44.8" height="0.7" fill="rgba(255,255,255,.3)"/><rect x="1667.21" y="1186.27" width="44.8" height="0.7" fill="rgba(255,255,255,.3)"/><rect x="1667.21" y="1191.75" width="44.8" height="0.7" fill="rgba(255,255,255,.3)"/><rect x="1667.21" y="1194.75" width="44.8" height="0.7" fill="rgba(255,255,255,.3)"/><rect x="1667.21" y="1197.75" width="44.8" height="0.7" fill="rgba(255,255,255,.3)"/><rect x="1667.21" y="1199.25" width="44.8" height="0.7" fill="rgba(255,255,255,.3)"/><rect x="1736.37" y="903.96" width="44.8" height="226.86" fill="#4285f4"/><rect x="1736.37" y="1130.82" width="44.8" height="55.80" fill="#ff5722"/><rect x="1736.37" y="1186.62" width="44.8" height="5.48" fill="#ff8f00"/><rect x="1736.37" y="1192.10" width="44.8" height="3.00" fill="#7cb342"/><rect x="1736.37" y="1195.10" width="44.8" height="3.00" fill="#ab47bc"/><rect x="1736.37" y="1198.10" width="44.8" height="1.50" fill="#00acc1"/><rect x="1736.37" y="1199.60" width="44.8" height="2.20" fill="#fb8c00"/><rect x="1736.37" y="1130.47" width="44.8" height="0.7" fill="rgba(255,255,255,.3)"/><rect x="1736.37" y="1186.27" width="44.8" height="0.7" fill="rgba(255,255,255,.3)"/><rect x="1736.37" y="1191.75" width="44.8" height="0.7" fill="rgba(255,255,255,.3)"/><rect x="1736.37" y="1194.75" width="44.8" height="0.7" fill="rgba(255,255,255,.3)"/><rect x="1736.37" y="1197.75" width="44.8" height="0.7" fill="rgba(255,255,255,.3)"/><rect x="1736.37" y="1199.25" width="44.8" height="0.7" fill="rgba(255,255,255,.3)"/><rect x="1805.52" y="903.96" width="44.8" height="226.86" fill="#4285f4"/><rect x="1805.52" y="1130.82" width="44.8" height="55.80" fill="#ff5722"/><rect x="1805.52" y="1186.62" width="44.8" height="5.48" fill="#ff8f00"/><rect x="1805.52" y="1192.10" width="44.8" height="3.00" fill="#7cb342"/><rect x="1805.52" y="1195.10" width="44.8" height="3.00" fill="#ab47bc"/><rect x="1805.52" y="1198.10" width="44.8" height="1.50" fill="#00acc1"/><rect x="1805.52" y="1199.60" width="44.8" height="2.20" fill="#fb8c00"/><rect x="1805.52" y="1130.47" width="44.8" height="0.7" fill="rgba(255,255,255,.3)"/><rect x="1805.52" y="1186.27" width="44.8" height="0.7" fill="rgba(255,255,255,.3)"/><rect x="1805.52" y="1191.75" width="44.8" height="0.7" fill="rgba(255,255,255,.3)"/><rect x="1805.52" y="1194.75" width="44.8" height="0.7" fill="rgba(255,255,255,.3)"/><rect x="1805.52" y="1197.75" width="44.8" height="0.7" fill="rgba(255,255,255,.3)"/><rect x="1805.52" y="1199.25" width="44.8" height="0.7" fill="rgba(255,255,255,.3)"/><rect x="1874.67" y="902.29" width="44.8" height="226.86" fill="#4285f4"/><rect x="1874.67" y="1129.15" width="44.8" height="55.80" fill="#ff5722"/><rect x="1874.67" y="1184.94" width="44.8" height="5.66" fill="#ff8f00"/><rect x="1874.67" y="1190.60" width="44.8" height="4.50" fill="#7cb342"/><rect x="1874.67" y="1195.10" width="44.8" height="3.00" fill="#ab47bc"/><rect x="1874.67" y="1198.10" width="44.8" height="1.50" fill="#00acc1"/><rect x="1874.67" y="1199.60" width="44.8" height="2.20" fill="#fb8c00"/><rect x="1874.67" y="1128.80" width="44.8" height="0.7" fill="rgba(255,255,255,.3)"/><rect x="1874.67" y="1184.59" width="44.8" height="0.7" fill="rgba(255,255,255,.3)"/><rect x="1874.67" y="1190.25" width="44.8" height="0.7" fill="rgba(255,255,255,.3)"/><rect x="1874.67" y="1194.75" width="44.8" height="0.7" fill="rgba(255,255,255,.3)"/><rect x="1874.67" y="1197.75" width="44.8" height="0.7" fill="rgba(255,255,255,.3)"/><rect x="1874.67" y="1199.25" width="44.8" height="0.7" fill="rgba(255,255,255,.3)"/><rect x="1943.83" y="900.28" width="44.8" height="228.87" fill="#4285f4"/><rect x="1943.83" y="1129.15" width="44.8" height="53.79" fill="#ff5722"/><rect x="1943.83" y="1182.94" width="44.8" height="7.16" fill="#ff8f00"/><rect x="1943.83" y="1190.10" width="44.8" height="6.00" fill="#7cb342"/><rect x="1943.83" y="1196.10" width="44.8" height="1.50" fill="#ab47bc"/><rect x="1943.83" y="1197.60" width="44.8" height="2.00" fill="#00acc1"/><rect x="1943.83" y="1199.60" width="44.8" height="2.20" fill="#fb8c00"/><rect x="1943.83" y="1128.80" width="44.8" height="0.7" fill="rgba(255,255,255,.3)"/><rect x="1943.83" y="1182.59" width="44.8" height="0.7" fill="rgba(255,255,255,.3)"/><rect x="1943.83" y="1189.75" width="44.8" height="0.7" fill="rgba(255,255,255,.3)"/><rect x="1943.83" y="1195.75" width="44.8" height="0.7" fill="rgba(255,255,255,.3)"/><rect x="1943.83" y="1197.25" width="44.8" height="0.7" fill="rgba(255,255,255,.3)"/><rect x="1943.83" y="1199.25" width="44.8" height="0.7" fill="rgba(255,255,255,.3)"/><rect x="2012.98" y="900.28" width="44.8" height="228.87" fill="#4285f4"/><rect x="2012.98" y="1129.15" width="44.8" height="55.80" fill="#ff5722"/><rect x="2012.98" y="1184.94" width="44.8" height="5.66" fill="#ff8f00"/><rect x="2012.98" y="1190.60" width="44.8" height="4.50" fill="#7cb342"/><rect x="2012.98" y="1195.10" width="44.8" height="3.00" fill="#ab47bc"/><rect x="2012.98" y="1198.10" width="44.8" height="1.50" fill="#00acc1"/><rect x="2012.98" y="1199.60" width="44.8" height="2.20" fill="#fb8c00"/><rect x="2012.98" y="1128.80" width="44.8" height="0.7" fill="rgba(255,255,255,.3)"/><rect x="2012.98" y="1184.59" width="44.8" height="0.7" fill="rgba(255,255,255,.3)"/><rect x="2012.98" y="1190.25" width="44.8" height="0.7" fill="rgba(255,255,255,.3)"/><rect x="2012.98" y="1194.75" width="44.8" height="0.7" fill="rgba(255,255,255,.3)"/><rect x="2012.98" y="1197.75" width="44.8" height="0.7" fill="rgba(255,255,255,.3)"/><rect x="2012.98" y="1199.25" width="44.8" height="0.7" fill="rgba(255,255,255,.3)"/><rect x="2082.14" y="900.28" width="44.8" height="228.87" fill="#4285f4"/><rect x="2082.14" y="1129.15" width="44.8" height="53.79" fill="#ff5722"/><rect x="2082.14" y="1182.94" width="44.8" height="7.36" fill="#ff8f00"/><rect x="2082.14" y="1190.30" width="44.8" height="5.50" fill="#7cb342"/><rect x="2082.14" y="1195.80" width="44.8" height="3.50" fill="#ab47bc"/><rect x="2082.14" y="1199.30" width="44.8" height="0.30" fill="#00acc1"/><rect x="2082.14" y="1199.60" width="44.8" height="2.20" fill="#5c6bc0"/><rect x="2082.14" y="1128.80" width="44.8" height="0.7" fill="rgba(255,255,255,.3)"/><rect x="2082.14" y="1182.59" width="44.8" height="0.7" fill="rgba(255,255,255,.3)"/><rect x="2082.14" y="1189.95" width="44.8" height="0.7" fill="rgba(255,255,255,.3)"/><rect x="2082.14" y="1195.45" width="44.8" height="0.7" fill="rgba(255,255,255,.3)"/><rect x="2082.14" y="1198.95" width="44.8" height="0.7" fill="rgba(255,255,255,.3)"/><rect x="2082.14" y="1199.25" width="44.8" height="0.7" fill="rgba(255,255,255,.3)"/><rect x="2151.30" y="902.29" width="44.8" height="226.86" fill="#4285f4"/><rect x="2151.30" y="1129.15" width="44.8" height="55.80" fill="#ff5722"/><rect x="2151.30" y="1184.94" width="44.8" height="6.36" fill="#ff8f00"/><rect x="2151.30" y="1191.30" width="44.8" height="4.50" fill="#7cb342"/><rect x="2151.30" y="1195.80" width="44.8" height="3.50" fill="#ab47bc"/><rect x="2151.30" y="1199.30" width="44.8" height="0.30" fill="#00acc1"/><rect x="2151.30" y="1199.60" width="44.8" height="2.20" fill="#5c6bc0"/><rect x="2151.30" y="1128.80" width="44.8" height="0.7" fill="rgba(255,255,255,.3)"/><rect x="2151.30" y="1184.59" width="44.8" height="0.7" fill="rgba(255,255,255,.3)"/><rect x="2151.30" y="1190.95" width="44.8" height="0.7" fill="rgba(255,255,255,.3)"/><rect x="2151.30" y="1195.45" width="44.8" height="0.7" fill="rgba(255,255,255,.3)"/><rect x="2151.30" y="1198.95" width="44.8" height="0.7" fill="rgba(255,255,255,.3)"/><rect x="2151.30" y="1199.25" width="44.8" height="0.7" fill="rgba(255,255,255,.3)"/><rect x="2220.45" y="902.29" width="44.8" height="228.53" fill="#4285f4"/><rect x="2220.45" y="1130.82" width="44.8" height="55.80" fill="#ff5722"/><rect x="2220.45" y="1186.62" width="44.8" height="6.28" fill="#ff8f00"/><rect x="2220.45" y="1192.90" width="44.8" height="3.20" fill="#7cb342"/><rect x="2220.45" y="1196.10" width="44.8" height="3.20" fill="#ab47bc"/><rect x="2220.45" y="1199.30" width="44.8" height="0.30" fill="#00acc1"/><rect x="2220.45" y="1199.60" width="44.8" height="2.20" fill="#5c6bc0"/><rect x="2220.45" y="1130.47" width="44.8" height="0.7" fill="rgba(255,255,255,.3)"/><rect x="2220.45" y="1186.27" width="44.8" height="0.7" fill="rgba(255,255,255,.3)"/><rect x="2220.45" y="1192.55" width="44.8" height="0.7" fill="rgba(255,255,255,.3)"/><rect x="2220.45" y="1195.75" width="44.8" height="0.7" fill="rgba(255,255,255,.3)"/><rect x="2220.45" y="1198.95" width="44.8" height="0.7" fill="rgba(255,255,255,.3)"/><rect x="2220.45" y="1199.25" width="44.8" height="0.7" fill="rgba(255,255,255,.3)"/></svg>
<div class="t" style="left:89.50px;top:803px;font-size:19px;line-height:19px;color:#5f6368;letter-spacing:-1.092px;">$2k</div>
<div class="t" style="left:74.50px;top:901px;font-size:19px;line-height:19px;color:#5f6368;letter-spacing:-0.762px;">$1.5k</div>
<div class="t" style="left:89.50px;top:998px;font-size:19px;line-height:19px;color:#5f6368;letter-spacing:-1.092px;">$1k</div>
<div class="t" style="left:74.50px;top:1095px;font-size:19px;line-height:19px;color:#5f6368;letter-spacing:-0.762px;">$0.5k</div>
<div class="t" style="left:107.45px;top:1193px;font-size:19px;line-height:19px;color:#5f6368;">0</div>
<div class="t" style="left:68.50px;top:1291px;font-size:19px;line-height:19px;color:#5f6368;letter-spacing:-0.673px;">-$0.5k</div>
<div class="t" style="left:139.80px;top:1312px;font-size:19px;line-height:19px;color:#5f6368;letter-spacing:-1.104px;">May 31</div>
<div class="t" style="left:215.80px;top:1312px;font-size:19px;line-height:19px;color:#5f6368;letter-spacing:-0.851px;">Jun 1</div>
<div class="t" style="left:284.96px;top:1312px;font-size:19px;line-height:19px;color:#5f6368;letter-spacing:-0.851px;">Jun 2</div>
<div class="t" style="left:354.11px;top:1312px;font-size:19px;line-height:19px;color:#5f6368;letter-spacing:-0.851px;">Jun 3</div>
<div class="t" style="left:423.27px;top:1312px;font-size:19px;line-height:19px;color:#5f6368;letter-spacing:-0.851px;">Jun 4</div>
<div class="t" style="left:492.42px;top:1312px;font-size:19px;line-height:19px;color:#5f6368;letter-spacing:-0.851px;">Jun 5</div>
<div class="t" style="left:561.58px;top:1312px;font-size:19px;line-height:19px;color:#5f6368;letter-spacing:-0.851px;">Jun 6</div>
<div class="t" style="left:630.74px;top:1312px;font-size:19px;line-height:19px;color:#5f6368;letter-spacing:-0.851px;">Jun 7</div>
<div class="t" style="left:699.89px;top:1312px;font-size:19px;line-height:19px;color:#5f6368;letter-spacing:-0.851px;">Jun 8</div>
<div class="t" style="left:769.05px;top:1312px;font-size:19px;line-height:19px;color:#5f6368;letter-spacing:-0.851px;">Jun 9</div>
<div class="t" style="left:833.00px;top:1312px;font-size:19px;line-height:19px;color:#5f6368;letter-spacing:-0.709px;">Jun 10</div>
<div class="t" style="left:902.15px;top:1312px;font-size:19px;line-height:19px;color:#5f6368;letter-spacing:-0.425px;">Jun 11</div>
<div class="t" style="left:971.31px;top:1312px;font-size:19px;line-height:19px;color:#5f6368;letter-spacing:-0.709px;">Jun 12</div>
<div class="t" style="left:1040.46px;top:1312px;font-size:19px;line-height:19px;color:#5f6368;letter-spacing:-0.709px;">Jun 13</div>
<div class="t" style="left:1109.62px;top:1312px;font-size:19px;line-height:19px;color:#5f6368;letter-spacing:-0.709px;">Jun 14</div>
<div class="t" style="left:1178.78px;top:1312px;font-size:19px;line-height:19px;color:#5f6368;letter-spacing:-0.709px;">Jun 15</div>
<div class="t" style="left:1247.93px;top:1312px;font-size:19px;line-height:19px;color:#5f6368;letter-spacing:-0.709px;">Jun 16</div>
<div class="t" style="left:1317.09px;top:1312px;font-size:19px;line-height:19px;color:#5f6368;letter-spacing:-0.709px;">Jun 17</div>
<div class="t" style="left:1386.24px;top:1312px;font-size:19px;line-height:19px;color:#5f6368;letter-spacing:-0.709px;">Jun 18</div>
<div class="t" style="left:1455.39px;top:1312px;font-size:19px;line-height:19px;color:#5f6368;letter-spacing:-0.709px;">Jun 19</div>
<div class="t" style="left:1524.55px;top:1312px;font-size:19px;line-height:19px;color:#5f6368;letter-spacing:-0.709px;">Jun 20</div>
<div class="t" style="left:1593.71px;top:1312px;font-size:19px;line-height:19px;color:#5f6368;letter-spacing:-0.709px;">Jun 21</div>
<div class="t" style="left:1662.86px;top:1312px;font-size:19px;line-height:19px;color:#5f6368;letter-spacing:-0.709px;">Jun 22</div>
<div class="t" style="left:1732.02px;top:1312px;font-size:19px;line-height:19px;color:#5f6368;letter-spacing:-0.709px;">Jun 23</div>
<div class="t" style="left:1801.17px;top:1312px;font-size:19px;line-height:19px;color:#5f6368;letter-spacing:-0.709px;">Jun 24</div>
<div class="t" style="left:1870.33px;top:1312px;font-size:19px;line-height:19px;color:#5f6368;letter-spacing:-0.709px;">Jun 25</div>
<div class="t" style="left:1939.48px;top:1312px;font-size:19px;line-height:19px;color:#5f6368;letter-spacing:-0.709px;">Jun 26</div>
<div class="t" style="left:2008.63px;top:1312px;font-size:19px;line-height:19px;color:#5f6368;letter-spacing:-0.709px;">Jun 27</div>
<div class="t" style="left:2077.79px;top:1312px;font-size:19px;line-height:19px;color:#5f6368;letter-spacing:-0.709px;">Jun 28</div>
<div class="t" style="left:2146.95px;top:1312px;font-size:19px;line-height:19px;color:#5f6368;letter-spacing:-0.709px;">Jun 29</div>
<div class="t" style="left:2216.10px;top:1312px;font-size:19px;line-height:19px;color:#5f6368;letter-spacing:-0.709px;">Jun 30</div>
<div class="a" style="left:79.00px;top:1370.00px;width:65.00px;height:42.50px;background:#e3e6e8;"></div>
<div class="t" style="left:158.60px;top:1377px;font-size:26px;line-height:26px;color:#202124;letter-spacing:-0.414px;">Forecasted cost</div>
<svg class="a" style="left:357.92px;top:1375.42px;width:32.16px;height:32.16px" viewBox="0 0 24 24"><path fill="#5f6368" d="M11 18h2v-2h-2v2zm1-16C6.48 2 2 6.48 2 12s4.48 10 10 10 10-4.48 10-10S17.52 2 12 2zm0 18c-4.41 0-8-3.59-8-8s3.59-8 8-8 8 3.59 8 8-3.59 8-8 8zm0-14c-2.21 0-4 1.79-4 4h2c0-1.1.9-2 2-2s2 .9 2 2c0 2-3 1.75-3 5h2c0-2.25 3-2.5 3-5 0-2.21-1.79-4-4-4z"/></svg>
<svg class="a" style="left:0.00px;top:1400.00px;width:2956.00px;height:100.00px;" viewBox="0 1400 2956 100" preserveAspectRatio="none"><path fill="#3c4043" d="M2084.7 1457.3H2091.7V1464.9H2098.7L2088.05 1477L2077.4 1464.9H2084.7Z"/><rect x="2077.4" y="1479.1" width="21.3" height="3.7" fill="#3c4043"/></svg>
<div class="t" style="left:2111.60px;top:1456px;font-size:26px;line-height:26px;color:#3c4043;letter-spacing:-0.177px;-webkit-text-stroke:0.45px #3c4043;">Download CSV</div>
<div class="a" style="left:3.00px;top:1516.00px;width:2332.50px;height:51.00px;background:#eef2f3;"></div>
<div class="t" style="left:101.20px;top:1528px;font-size:26px;line-height:26px;color:#202124;letter-spacing:-0.252px;-webkit-text-stroke:0.45px #202124;">Service</div>
<svg class="a" style="left:198.72px;top:1525.92px;width:32.16px;height:32.16px" viewBox="0 0 24 24"><path fill="#5f6368" d="M11 18h2v-2h-2v2zm1-16C6.48 2 2 6.48 2 12s4.48 10 10 10 10-4.48 10-10S17.52 2 12 2zm0 18c-4.41 0-8-3.59-8-8s3.59-8 8-8 8 3.59 8 8-3.59 8-8 8zm0-14c-2.21 0-4 1.79-4 4h2c0-1.1.9-2 2-2s2 .9 2 2c0 2-3 1.75-3 5h2c0-2.25 3-2.5 3-5 0-2.21-1.79-4-4-4z"/></svg>
<div class="t" style="left:588.20px;top:1528px;font-size:26px;line-height:26px;color:#202124;letter-spacing:-0.263px;-webkit-text-stroke:0.45px #202124;">Usage cost</div>
<svg class="a" style="left:728.92px;top:1525.92px;width:32.16px;height:32.16px" viewBox="0 0 24 24"><path fill="#5f6368" d="M11 18h2v-2h-2v2zm1-16C6.48 2 2 6.48 2 12s4.48 10 10 10 10-4.48 10-10S17.52 2 12 2zm0 18c-4.41 0-8-3.59-8-8s3.59-8 8-8 8 3.59 8 8-3.59 8-8 8zm0-14c-2.21 0-4 1.79-4 4h2c0-1.1.9-2 2-2s2 .9 2 2c0 2-3 1.75-3 5h2c0-2.25 3-2.5 3-5 0-2.21-1.79-4-4-4z"/></svg>
<div class="t" style="left:989.70px;top:1528px;font-size:26px;line-height:26px;color:#202124;letter-spacing:-0.091px;-webkit-text-stroke:0.45px #202124;">Savings programs</div>
<svg class="a" style="left:1209.92px;top:1525.92px;width:32.16px;height:32.16px" viewBox="0 0 24 24"><path fill="#5f6368" d="M11 18h2v-2h-2v2zm1-16C6.48 2 2 6.48 2 12s4.48 10 10 10 10-4.48 10-10S17.52 2 12 2zm0 18c-4.41 0-8-3.59-8-8s3.59-8 8-8 8 3.59 8 8-3.59 8-8 8zm0-14c-2.21 0-4 1.79-4 4h2c0-1.1.9-2 2-2s2 .9 2 2c0 2-3 1.75-3 5h2c0-2.25 3-2.5 3-5 0-2.21-1.79-4-4-4z"/></svg>
<div class="t" style="left:1458.00px;top:1528px;font-size:26px;line-height:26px;color:#202124;letter-spacing:0.090px;-webkit-text-stroke:0.45px #202124;">Other savings</div>
<svg class="a" style="left:1632.12px;top:1525.92px;width:32.16px;height:32.16px" viewBox="0 0 24 24"><path fill="#5f6368" d="M11 18h2v-2h-2v2zm1-16C6.48 2 2 6.48 2 12s4.48 10 10 10 10-4.48 10-10S17.52 2 12 2zm0 18c-4.41 0-8-3.59-8-8s3.59-8 8-8 8 3.59 8 8-3.59 8-8 8zm0-14c-2.21 0-4 1.79-4 4h2c0-1.1.9-2 2-2s2 .9 2 2c0 2-3 1.75-3 5h2c0-2.25 3-2.5 3-5 0-2.21-1.79-4-4-4z"/></svg>
<svg class="a" style="left:1801.50px;top:1525.50px;width:31.00px;height:31.00px" viewBox="0 0 24 24"><path fill="#202124" d="M20 12l-1.41-1.41L13 16.17V4h-2v12.17l-5.58-5.59L4 12l8 8 8-8z"/></svg>
<div class="t" style="left:1846.00px;top:1528px;font-size:26px;line-height:26px;color:#202124;letter-spacing:0.054px;-webkit-text-stroke:0.45px #202124;">Subtotal</div>
<div class="t" style="left:2139.70px;top:1528px;font-size:26px;line-height:26px;color:#202124;letter-spacing:-0.631px;-webkit-text-stroke:0.45px #202124;">% Change</div>
<svg class="a" style="left:2269.92px;top:1525.92px;width:32.16px;height:32.16px" viewBox="0 0 24 24"><path fill="#5f6368" d="M11 18h2v-2h-2v2zm1-16C6.48 2 2 6.48 2 12s4.48 10 10 10 10-4.48 10-10S17.52 2 12 2zm0 18c-4.41 0-8-3.59-8-8s3.59-8 8-8 8 3.59 8 8-3.59 8-8 8zm0-14c-2.21 0-4 1.79-4 4h2c0-1.1.9-2 2-2s2 .9 2 2c0 2-3 1.75-3 5h2c0-2.25 3-2.5 3-5 0-2.21-1.79-4-4-4z"/></svg>
<div class="a" style="left:3.00px;top:1567.00px;width:2332.50px;height:1.00px;background:#dadce0;"></div>
<div class="a" style="left:3.00px;top:1618.00px;width:2332.50px;height:1.00px;background:#dadce0;"></div>
<div class="t" style="left:101.00px;top:1580px;font-size:25.7px;line-height:25.7px;color:#5f6368;letter-spacing:-0.724px;">Cloud Spanner</div>
<div class="t" style="left:643.65px;top:1580px;font-size:25.7px;line-height:25.7px;color:#5f6368;letter-spacing:-0.775px;">$35,136.00</div>
<div class="t" style="left:1186.10px;top:1580px;font-size:25.7px;line-height:25.7px;color:#5f6368;letter-spacing:-0.929px;">$0.00</div>
<div class="t" style="left:1607.90px;top:1580px;font-size:25.7px;line-height:25.7px;color:#5f6368;letter-spacing:-0.929px;">$0.00</div>
<div class="t" style="left:1820.15px;top:1580px;font-size:25.7px;line-height:25.7px;color:#5f6368;letter-spacing:-0.775px;">$35,136.00</div>
<div class="t" style="left:2262.05px;top:1580px;font-size:25.7px;line-height:25.7px;color:#d93025;letter-spacing:-3.607px;">20%</div>
<svg class="a" style="left:2227.85px;top:1581.60px;width:21.00px;height:25.50px;" viewBox="0 0 21 25.5" preserveAspectRatio="none"><path d="M10.5 25.5V2.5M1.3 11.7L10.5 2.5L19.7 11.7" fill="none" stroke="#d93025" stroke-width="3.6"/></svg>
<div class="a" style="left:3.00px;top:1670.00px;width:2332.50px;height:1.00px;background:#dadce0;"></div>
<div class="t" style="left:101.00px;top:1631px;font-size:25.7px;line-height:25.7px;color:#5f6368;letter-spacing:-0.613px;">Compute Engine</div>
<div class="t" style="left:657.69px;top:1631px;font-size:25.7px;line-height:25.7px;color:#5f6368;letter-spacing:-0.844px;">$8,878.52</div>
<div class="t" style="left:1151.12px;top:1631px;font-size:25.7px;line-height:25.7px;color:#5f6368;letter-spacing:-0.839px;">-$314.00</div>
<div class="t" style="left:1601.00px;top:1631px;font-size:25.7px;line-height:25.7px;color:#5f6368;letter-spacing:-1.072px;">-$7.52</div>
<div class="t" style="left:1834.19px;top:1631px;font-size:25.7px;line-height:25.7px;color:#5f6368;letter-spacing:-0.844px;">$8,556.99</div>
<div class="t" style="left:2262.05px;top:1631px;font-size:25.7px;line-height:25.7px;color:#d93025;letter-spacing:-3.607px;">20%</div>
<svg class="a" style="left:2227.85px;top:1632.94px;width:21.00px;height:25.50px;" viewBox="0 0 21 25.5" preserveAspectRatio="none"><path d="M10.5 25.5V2.5M1.3 11.7L10.5 2.5L19.7 11.7" fill="none" stroke="#d93025" stroke-width="3.6"/></svg>
<div class="a" style="left:3.00px;top:1721.00px;width:2332.50px;height:1.00px;background:#dadce0;"></div>
<div class="t" style="left:101.00px;top:1682px;font-size:25.7px;line-height:25.7px;color:#5f6368;letter-spacing:-0.955px;">AlloyDB</div>
<div class="t" style="left:657.69px;top:1682px;font-size:25.7px;line-height:25.7px;color:#5f6368;letter-spacing:-0.603px;">$1,011.29</div>
<div class="t" style="left:1151.12px;top:1682px;font-size:25.7px;line-height:25.7px;color:#5f6368;letter-spacing:-0.839px;">-$195.89</div>
<div class="t" style="left:1607.90px;top:1682px;font-size:25.7px;line-height:25.7px;color:#5f6368;letter-spacing:-0.929px;">$0.00</div>
<div class="t" style="left:1853.12px;top:1682px;font-size:25.7px;line-height:25.7px;color:#5f6368;letter-spacing:-0.705px;">$815.41</div>
<div class="t" style="left:2262.05px;top:1682px;font-size:25.7px;line-height:25.7px;color:#d93025;letter-spacing:-3.607px;">20%</div>
<svg class="a" style="left:2227.85px;top:1684.28px;width:21.00px;height:25.50px;" viewBox="0 0 21 25.5" preserveAspectRatio="none"><path d="M10.5 25.5V2.5M1.3 11.7L10.5 2.5L19.7 11.7" fill="none" stroke="#d93025" stroke-width="3.6"/></svg>
<div class="a" style="left:3.00px;top:1772.00px;width:2332.50px;height:1.00px;background:#dadce0;"></div>
<div class="t" style="left:101.00px;top:1734px;font-size:25.7px;line-height:25.7px;color:#5f6368;letter-spacing:-1.217px;">Cloud SQL</div>
<div class="t" style="left:676.62px;top:1734px;font-size:25.7px;line-height:25.7px;color:#5f6368;letter-spacing:-0.705px;">$658.91</div>
<div class="t" style="left:1179.20px;top:1734px;font-size:25.7px;line-height:25.7px;color:#5f6368;letter-spacing:-1.072px;">-$1.16</div>
<div class="t" style="left:1607.90px;top:1734px;font-size:25.7px;line-height:25.7px;color:#5f6368;letter-spacing:-0.929px;">$0.00</div>
<div class="t" style="left:1853.12px;top:1734px;font-size:25.7px;line-height:25.7px;color:#5f6368;letter-spacing:-0.705px;">$657.75</div>
<div class="t" style="left:2262.05px;top:1734px;font-size:25.7px;line-height:25.7px;color:#d93025;letter-spacing:-3.607px;">31%</div>
<svg class="a" style="left:2227.85px;top:1735.62px;width:21.00px;height:25.50px;" viewBox="0 0 21 25.5" preserveAspectRatio="none"><path d="M10.5 25.5V2.5M1.3 11.7L10.5 2.5L19.7 11.7" fill="none" stroke="#d93025" stroke-width="3.6"/></svg>
<div class="a" style="left:3.00px;top:1824.00px;width:2332.50px;height:1.00px;background:#dadce0;"></div>
<div class="t" style="left:101.00px;top:1785px;font-size:25.7px;line-height:25.7px;color:#5f6368;letter-spacing:-0.398px;">Cloud Bigtable</div>
<div class="t" style="left:676.62px;top:1785px;font-size:25.7px;line-height:25.7px;color:#5f6368;letter-spacing:-0.705px;">$466.46</div>
<div class="t" style="left:1186.10px;top:1785px;font-size:25.7px;line-height:25.7px;color:#5f6368;letter-spacing:-0.929px;">$0.00</div>
<div class="t" style="left:1607.90px;top:1785px;font-size:25.7px;line-height:25.7px;color:#5f6368;letter-spacing:-0.929px;">$0.00</div>
<div class="t" style="left:1853.12px;top:1785px;font-size:25.7px;line-height:25.7px;color:#5f6368;letter-spacing:-0.705px;">$466.46</div>
<div class="t" style="left:2262.05px;top:1785px;font-size:25.7px;line-height:25.7px;color:#d93025;letter-spacing:-3.607px;">20%</div>
<svg class="a" style="left:2227.85px;top:1786.96px;width:21.00px;height:25.50px;" viewBox="0 0 21 25.5" preserveAspectRatio="none"><path d="M10.5 25.5V2.5M1.3 11.7L10.5 2.5L19.7 11.7" fill="none" stroke="#d93025" stroke-width="3.6"/></svg>
<div class="a" style="left:3.00px;top:1875.00px;width:2332.50px;height:1.00px;background:#dadce0;"></div>
<div class="t" style="left:101.00px;top:1837px;font-size:25.7px;line-height:25.7px;color:#5f6368;letter-spacing:-0.640px;">Gemini API</div>
<div class="t" style="left:676.62px;top:1837px;font-size:25.7px;line-height:25.7px;color:#5f6368;letter-spacing:-0.705px;">$257.24</div>
<div class="t" style="left:1186.10px;top:1837px;font-size:25.7px;line-height:25.7px;color:#5f6368;letter-spacing:-0.929px;">$0.00</div>
<div class="t" style="left:1607.90px;top:1837px;font-size:25.7px;line-height:25.7px;color:#5f6368;letter-spacing:-0.929px;">$0.00</div>
<div class="t" style="left:1853.12px;top:1837px;font-size:25.7px;line-height:25.7px;color:#5f6368;letter-spacing:-0.705px;">$257.24</div>
<div class="t" style="left:2248.01px;top:1837px;font-size:25.7px;line-height:25.7px;color:#d93025;letter-spacing:-2.480px;">296%</div>
<svg class="a" style="left:2213.81px;top:1838.30px;width:21.00px;height:25.50px;" viewBox="0 0 21 25.5" preserveAspectRatio="none"><path d="M10.5 25.5V2.5M1.3 11.7L10.5 2.5L19.7 11.7" fill="none" stroke="#d93025" stroke-width="3.6"/></svg>
<div class="a" style="left:3.00px;top:1926.00px;width:2332.50px;height:1.00px;background:#dadce0;"></div>
<div class="t" style="left:101.00px;top:1888px;font-size:25.7px;line-height:25.7px;color:#5f6368;letter-spacing:-0.716px;">Duet AI</div>
<div class="t" style="left:676.62px;top:1888px;font-size:25.7px;line-height:25.7px;color:#5f6368;letter-spacing:-0.705px;">$228.00</div>
<div class="t" style="left:1186.10px;top:1888px;font-size:25.7px;line-height:25.7px;color:#5f6368;letter-spacing:-0.929px;">$0.00</div>
<div class="t" style="left:1607.90px;top:1888px;font-size:25.7px;line-height:25.7px;color:#5f6368;letter-spacing:-0.929px;">$0.00</div>
<div class="t" style="left:1853.12px;top:1888px;font-size:25.7px;line-height:25.7px;color:#5f6368;letter-spacing:-0.705px;">$228.00</div>
<div class="t" style="left:2262.05px;top:1888px;font-size:25.7px;line-height:25.7px;color:#d93025;letter-spacing:-3.607px;">24%</div>
<svg class="a" style="left:2227.85px;top:1889.64px;width:21.00px;height:25.50px;" viewBox="0 0 21 25.5" preserveAspectRatio="none"><path d="M10.5 25.5V2.5M1.3 11.7L10.5 2.5L19.7 11.7" fill="none" stroke="#d93025" stroke-width="3.6"/></svg>
<div class="a" style="left:3.00px;top:1978.00px;width:2332.50px;height:1.00px;background:#dadce0;"></div>
<div class="t" style="left:101.00px;top:1939px;font-size:25.7px;line-height:25.7px;color:#5f6368;letter-spacing:-0.321px;">Vertex AI</div>
<div class="t" style="left:690.66px;top:1939px;font-size:25.7px;line-height:25.7px;color:#5f6368;letter-spacing:-0.788px;">$28.19</div>
<div class="t" style="left:1186.10px;top:1939px;font-size:25.7px;line-height:25.7px;color:#5f6368;letter-spacing:-0.929px;">$0.00</div>
<div class="t" style="left:1607.90px;top:1939px;font-size:25.7px;line-height:25.7px;color:#5f6368;letter-spacing:-0.929px;">$0.00</div>
<div class="t" style="left:1867.16px;top:1939px;font-size:25.7px;line-height:25.7px;color:#5f6368;letter-spacing:-0.788px;">$28.19</div>
<div class="t" style="left:2262.05px;top:1939px;font-size:25.7px;line-height:25.7px;color:#d93025;letter-spacing:-3.607px;">26%</div>
<svg class="a" style="left:2227.85px;top:1940.98px;width:21.00px;height:25.50px;" viewBox="0 0 21 25.5" preserveAspectRatio="none"><path d="M10.5 25.5V2.5M1.3 11.7L10.5 2.5L19.7 11.7" fill="none" stroke="#d93025" stroke-width="3.6"/></svg>
<div class="a" style="left:3.00px;top:2029.00px;width:2332.50px;height:1.00px;background:#dadce0;"></div>
<div class="t" style="left:101.00px;top:1991px;font-size:25.7px;line-height:25.7px;color:#5f6368;letter-spacing:-0.646px;">Kubernetes Engine</div>
<div class="t" style="left:690.66px;top:1991px;font-size:25.7px;line-height:25.7px;color:#5f6368;letter-spacing:-0.788px;">$88.32</div>
<div class="t" style="left:1186.10px;top:1991px;font-size:25.7px;line-height:25.7px;color:#5f6368;letter-spacing:-0.929px;">$0.00</div>
<div class="t" style="left:1586.96px;top:1991px;font-size:25.7px;line-height:25.7px;color:#5f6368;letter-spacing:-0.942px;">-$74.40</div>
<div class="t" style="left:1867.16px;top:1991px;font-size:25.7px;line-height:25.7px;color:#5f6368;letter-spacing:-0.788px;">$13.92</div>
<div class="t" style="left:2257.80px;top:1991px;font-size:25.7px;line-height:25.7px;color:#5f6368;letter-spacing:-1.482px;">New</div>
<div class="a" style="left:3.00px;top:2080.00px;width:2310.00px;height:1.00px;background:#dadce0;"></div>
<div class="t" style="left:101.00px;top:2042px;font-size:25.7px;line-height:25.7px;color:#5f6368;letter-spacing:-0.207px;">Networking</div>
<div class="t" style="left:690.66px;top:2042px;font-size:25.7px;line-height:25.7px;color:#5f6368;letter-spacing:-0.788px;">$32.41</div>
<div class="t" style="left:1186.10px;top:2042px;font-size:25.7px;line-height:25.7px;color:#5f6368;letter-spacing:-0.929px;">$0.00</div>
<div class="t" style="left:1586.96px;top:2042px;font-size:25.7px;line-height:25.7px;color:#5f6368;letter-spacing:-0.942px;">-$26.65</div>
<div class="t" style="left:1881.20px;top:2042px;font-size:25.7px;line-height:25.7px;color:#5f6368;letter-spacing:-0.929px;">$5.76</div>
<div class="t" style="left:2262.05px;top:2042px;font-size:25.7px;line-height:25.7px;color:#d93025;letter-spacing:-3.607px;">23%</div>
<svg class="a" style="left:2227.85px;top:2043.66px;width:21.00px;height:25.50px;" viewBox="0 0 21 25.5" preserveAspectRatio="none"><path d="M10.5 25.5V2.5M1.3 11.7L10.5 2.5L19.7 11.7" fill="none" stroke="#d93025" stroke-width="3.6"/></svg>
<svg class="a" style="left:0;top:0;width:2956px;height:2405px;pointer-events:none" viewBox="0 0 2956 2405"><circle cx="50.5" cy="1593.27" r="7.2" fill="#4285f4"/><rect x="43.5" y="1637.61" width="14" height="14" fill="#ff5722"/><path d="M50.5 1686.95 L59.5 1695.95 L50.5 1704.95 L41.5 1695.95Z" fill="#ff8f00"/><path d="M41.0 1740.29 L60.0 1740.29 L50.5 1754.29Z" fill="#7cb342"/><path d="M41.0 1805.63 L60.0 1805.63 L50.5 1791.63Z" fill="#ab47bc"/><path d="M43.0 1857.47 V1849.97 A7.5 7.5 0 0 1 58.0 1849.97 V1857.47Z" fill="#00acc1"/><path d="M47.3 1891.81 H53.7 V1898.11 H60.0 V1904.51 H53.7 V1910.81 H47.3 V1904.51 H41.0 V1898.11 H47.3Z" fill="#f57c00"/><g transform="translate(50.5,1952.65) rotate(45)"><path d="M-3.2 -10 H3.2 V-3.2 H10 V3.2 H3.2 V10 H-3.2 V3.2 H-10 V-3.2 H-3.2Z" fill="#9e9d24"/></g><path d="M43.0 1996.49 H58.0 V2003.99 A7.5 7.5 0 0 1 43.0 2003.99Z" fill="#5c6bc0"/><polygon points="50.50,2046.33 53.03,2052.85 60.01,2053.24 54.59,2057.66 56.38,2064.42 50.50,2060.63 44.62,2064.42 46.41,2057.66 40.99,2053.24 47.97,2052.85" fill="#f06292"/></svg>
<div class="t" style="left:1676.70px;top:2097px;font-size:26.5px;line-height:26.5px;color:#5f6368;letter-spacing:-1.179px;">Rows per page:</div>
<div class="t" style="left:1901.60px;top:2097px;font-size:26px;line-height:26px;color:#202124;letter-spacing:-2.625px;">10</div>
<svg class="a" style="left:1938.00px;top:2104.50px;width:17.60px;height:9.00px;" viewBox="0 0 10 5" preserveAspectRatio="none"><path fill="#202124" d="M0 0H10L5 5Z"/></svg>
<div class="t" style="left:2014.00px;top:2097px;font-size:26.5px;line-height:26.5px;color:#5f6368;letter-spacing:-0.544px;">1 – 10 of 17</div>
<svg class="a" style="left:2188.60px;top:2086.60px;width:47.40px;height:47.40px" viewBox="0 0 24 24"><path fill="#bdbdbd" d="M15.41 7.41L14 6l-6 6 6 6 1.41-1.41L10.83 12z"/></svg>
<svg class="a" style="left:2261.00px;top:2086.60px;width:47.40px;height:47.40px" viewBox="0 0 24 24"><path fill="#3c4043" d="M10 6L8.59 7.41 13.17 12l-4.58 4.59L10 18l6-6z"/></svg>
<div class="a" style="left:43.50px;top:2167.50px;width:2249.00px;height:210.00px;background:#f8f9fa;border:1.5px solid #dadce0;border-radius:16px;"></div>
<div class="t" style="left:1948.00px;top:2208px;font-size:26px;line-height:26px;color:#202124;letter-spacing:-0.060px;-webkit-text-stroke:0.45px #202124;">Subtotal</div>
<div class="t" style="left:2145.00px;top:2208px;font-size:26px;line-height:26px;color:#202124;letter-spacing:-1.426px;-webkit-text-stroke:0.45px #202124;">$46,167.93</div>
<div class="t" style="left:1848.00px;top:2244px;font-size:26px;line-height:26px;color:#202124;letter-spacing:0.294px;-webkit-text-stroke:0.45px #202124;">Adjustments</div>
<svg class="a" style="left:2006.92px;top:2241.52px;width:32.16px;height:32.16px" viewBox="0 0 24 24"><path fill="#5f6368" d="M11 18h2v-2h-2v2zm1-16C6.48 2 2 6.48 2 12s4.48 10 10 10 10-4.48 10-10S17.52 2 12 2zm0 18c-4.41 0-8-3.59-8-8s3.59-8 8-8 8 3.59 8 8-3.59 8-8 8zm0-14c-2.21 0-4 1.79-4 4h2c0-1.1.9-2 2-2s2 .9 2 2c0 2-3 1.75-3 5h2c0-2.25 3-2.5 3-5 0-2.21-1.79-4-4-4z"/></svg>
<div class="t" style="left:2130.30px;top:2244px;font-size:26px;line-height:26px;color:#202124;letter-spacing:-0.678px;-webkit-text-stroke:0.45px #202124;">-$12,901.58</div>
<div class="t" style="left:1958.60px;top:2280px;font-size:26px;line-height:26px;color:#202124;letter-spacing:-2.515px;-webkit-text-stroke:0.45px #202124;">Tax</div>
<svg class="a" style="left:2006.92px;top:2277.12px;width:32.16px;height:32.16px" viewBox="0 0 24 24"><path fill="#5f6368" d="M11 18h2v-2h-2v2zm1-16C6.48 2 2 6.48 2 12s4.48 10 10 10 10-4.48 10-10S17.52 2 12 2zm0 18c-4.41 0-8-3.59-8-8s3.59-8 8-8 8 3.59 8 8-3.59 8-8 8zm0-14c-2.21 0-4 1.79-4 4h2c0-1.1.9-2 2-2s2 .9 2 2c0 2-3 1.75-3 5h2c0-2.25 3-2.5 3-5 0-2.21-1.79-4-4-4z"/></svg>
<div class="t" style="left:2155.30px;top:2280px;font-size:26px;line-height:26px;color:#202124;letter-spacing:-1.088px;-webkit-text-stroke:0.45px #202124;">$1,663.32</div>
<div class="t" style="left:1853.70px;top:2315px;font-size:26px;line-height:26px;color:#202124;letter-spacing:0.127px;-webkit-text-stroke:0.45px #202124;">Invoice total</div>
<svg class="a" style="left:2006.92px;top:2313.12px;width:32.16px;height:32.16px" viewBox="0 0 24 24"><path fill="#5f6368" d="M11 18h2v-2h-2v2zm1-16C6.48 2 2 6.48 2 12s4.48 10 10 10 10-4.48 10-10S17.52 2 12 2zm0 18c-4.41 0-8-3.59-8-8s3.59-8 8-8 8 3.59 8 8-3.59 8-8 8zm0-14c-2.21 0-4 1.79-4 4h2c0-1.1.9-2 2-2s2 .9 2 2c0 2-3 1.75-3 5h2c0-2.25 3-2.5 3-5 0-2.21-1.79-4-4-4z"/></svg>
<div class="t" style="left:2140.30px;top:2315px;font-size:26px;line-height:26px;color:#202124;letter-spacing:-0.903px;-webkit-text-stroke:0.45px #202124;">$34,929.67</div>
<div class="a" style="left:1809.00px;top:2231.00px;width:493.00px;height:87.00px;border:8px solid #ff0000;"></div>
<svg class="a" style="left:0;top:0;width:2956px;height:2405px;pointer-events:none" viewBox="0 0 2956 2405"><path d="M2297 2262 L2394 2166" stroke="#ff0000" stroke-width="8.5" fill="none"/></svg>
<div class="t" style="left:2411.60px;top:136px;font-size:30px;line-height:30px;color:#1f1f1f;letter-spacing:-0.289px;-webkit-text-stroke:0.5px #1f1f1f;">Time range</div>
<div class="a" style="left:2418.20px;top:202.30px;width:35.60px;height:35.60px;border:3.2px solid #5f6368;border-radius:50%;"></div>
<div class="t" style="left:2469.70px;top:207px;font-size:25.9px;line-height:25.9px;color:#1f1f1f;letter-spacing:-0.798px;">Usage date</div>
<div class="a" style="left:2631.00px;top:202.30px;width:35.60px;height:35.60px;border:3.2px solid #0d63dd;border-radius:50%;"></div>
<div class="a" style="left:2640.00px;top:211.30px;width:17.60px;height:17.60px;background:#0d63dd;border-radius:50%;"></div>
<div class="t" style="left:2682.60px;top:207px;font-size:25.9px;line-height:25.9px;color:#1f1f1f;letter-spacing:-0.377px;">Invoice month</div>
<div class="a" style="left:2411.20px;top:280.40px;width:221.00px;height:64.50px;border:1.5px solid #767a7e;border-radius:8px;"></div>
<div class="a" style="left:2424.60px;top:277.40px;width:64.70px;height:6.00px;background:#fff;"></div>
<div class="t" style="left:2432.60px;top:269px;font-size:21.7px;line-height:21.7px;color:#5f6368;letter-spacing:-0.638px;">From</div>
<div class="t" style="left:2432.60px;top:299px;font-size:25.7px;line-height:25.7px;color:#1f1f1f;letter-spacing:-0.177px;">June 2025</div>
<svg class="a" style="left:2585.20px;top:307.00px;width:17.60px;height:9.60px;" viewBox="0 0 10 5" preserveAspectRatio="none"><path fill="#202124" d="M0 0H10L5 5Z"/></svg>
<div class="a" style="left:2662.00px;top:280.40px;width:221.60px;height:64.50px;border:1.5px solid #767a7e;border-radius:8px;"></div>
<div class="a" style="left:2675.40px;top:277.40px;width:39.20px;height:6.00px;background:#fff;"></div>
<div class="t" style="left:2683.40px;top:269px;font-size:21.7px;line-height:21.7px;color:#5f6368;letter-spacing:0.306px;">To</div>
<div class="t" style="left:2683.40px;top:299px;font-size:25.7px;line-height:25.7px;color:#1f1f1f;letter-spacing:-0.177px;">June 2025</div>
<svg class="a" style="left:2836.20px;top:307.00px;width:17.60px;height:9.60px;" viewBox="0 0 10 5" preserveAspectRatio="none"><path fill="#202124" d="M0 0H10L5 5Z"/></svg>
<div class="a" style="left:2411.20px;top:385.40px;width:472.40px;height:64.50px;border:1.5px solid #767a7e;border-radius:8px;"></div>
<div class="a" style="left:2424.60px;top:382.40px;width:101.00px;height:6.00px;background:#fff;"></div>
<div class="t" style="left:2432.60px;top:374px;font-size:21.7px;line-height:21.7px;color:#5f6368;letter-spacing:-0.606px;">Group by</div>
<div class="t" style="left:2432.60px;top:404px;font-size:25.7px;line-height:25.7px;color:#1f1f1f;letter-spacing:-0.502px;">Service</div>
<svg class="a" style="left:2836.20px;top:412.00px;width:17.60px;height:9.60px;" viewBox="0 0 10 5" preserveAspectRatio="none"><path fill="#202124" d="M0 0H10L5 5Z"/></svg>
<div class="a" style="left:2411.00px;top:478.50px;width:474.00px;height:1.80px;background:#dadce0;"></div>
<div class="a" style="left:2411.00px;top:527.20px;width:472.80px;height:64.50px;border:1.5px solid #767a7e;border-radius:8px;"></div>
<div class="a" style="left:2424.40px;top:524.20px;width:243.50px;height:6.00px;background:#fff;"></div>
<div class="t" style="left:2432.40px;top:516px;font-size:21.7px;line-height:21.7px;color:#5f6368;letter-spacing:-0.240px;">Folders &amp; Organizations</div>
<div class="t" style="left:2432.40px;top:546px;font-size:25.7px;line-height:25.7px;color:#1f1f1f;letter-spacing:0.242px;">All folders/organizations (58)</div>
<svg class="a" style="left:2836.40px;top:553.80px;width:17.60px;height:9.60px;" viewBox="0 0 10 5" preserveAspectRatio="none"><path fill="#202124" d="M0 0H10L5 5Z"/></svg>
<div class="a" style="left:2411.00px;top:631.40px;width:472.80px;height:64.50px;border:1.5px solid #767a7e;border-radius:8px;"></div>
<div class="a" style="left:2424.40px;top:628.40px;width:93.80px;height:6.00px;background:#fff;"></div>
<div class="t" style="left:2432.40px;top:620px;font-size:21.7px;line-height:21.7px;color:#5f6368;letter-spacing:-0.084px;">Projects</div>
<div class="t" style="left:2432.40px;top:650px;font-size:25.7px;line-height:25.7px;color:#1f1f1f;letter-spacing:0.155px;">All projects (1143)</div>
<svg class="a" style="left:2836.40px;top:658.00px;width:17.60px;height:9.60px;" viewBox="0 0 10 5" preserveAspectRatio="none"><path fill="#202124" d="M0 0H10L5 5Z"/></svg>
<div class="a" style="left:2411.00px;top:736.30px;width:472.80px;height:64.50px;border:1.5px solid #767a7e;border-radius:8px;"></div>
<div class="a" style="left:2424.40px;top:733.30px;width:96.00px;height:6.00px;background:#fff;"></div>
<div class="t" style="left:2432.40px;top:725px;font-size:21.7px;line-height:21.7px;color:#5f6368;letter-spacing:-0.460px;">Services</div>
<div class="t" style="left:2432.40px;top:755px;font-size:25.7px;line-height:25.7px;color:#1f1f1f;letter-spacing:-0.024px;">All services (47)</div>
<svg class="a" style="left:2775.20px;top:762.90px;width:17.60px;height:9.60px;" viewBox="0 0 10 5" preserveAspectRatio="none"><path fill="#202124" d="M0 0H10L5 5Z"/></svg>
<svg class="a" style="left:2829.22px;top:752.22px;width:32.16px;height:32.16px" viewBox="0 0 24 24"><path fill="#5f6368" d="M11 18h2v-2h-2v2zm1-16C6.48 2 2 6.48 2 12s4.48 10 10 10 10-4.48 10-10S17.52 2 12 2zm0 18c-4.41 0-8-3.59-8-8s3.59-8 8-8 8 3.59 8 8-3.59 8-8 8zm0-14c-2.21 0-4 1.79-4 4h2c0-1.1.9-2 2-2s2 .9 2 2c0 2-3 1.75-3 5h2c0-2.25 3-2.5 3-5 0-2.21-1.79-4-4-4z"/></svg>
<div class="a" style="left:2411.00px;top:840.20px;width:472.80px;height:64.50px;border:1.5px solid #767a7e;border-radius:8px;"></div>
<div class="a" style="left:2424.40px;top:837.20px;width:66.50px;height:6.00px;background:#fff;"></div>
<div class="t" style="left:2432.40px;top:829px;font-size:21.7px;line-height:21.7px;color:#5f6368;letter-spacing:-1.648px;">SKUs</div>
<div class="t" style="left:2432.40px;top:859px;font-size:25.7px;line-height:25.7px;color:#1f1f1f;letter-spacing:-0.448px;">All SKUs (859)</div>
<svg class="a" style="left:2836.40px;top:866.80px;width:17.60px;height:9.60px;" viewBox="0 0 10 5" preserveAspectRatio="none"><path fill="#202124" d="M0 0H10L5 5Z"/></svg>
<div class="a" style="left:2411.00px;top:943.40px;width:472.80px;height:64.50px;border:1.5px solid #767a7e;border-radius:8px;"></div>
<div class="a" style="left:2424.40px;top:940.40px;width:134.30px;height:6.00px;background:#fff;"></div>
<div class="t" style="left:2432.40px;top:932px;font-size:21.7px;line-height:21.7px;color:#5f6368;letter-spacing:0.117px;">Applications</div>
<div class="t" style="left:2432.40px;top:962px;font-size:25.7px;line-height:25.7px;color:#1f1f1f;letter-spacing:0.081px;">All applications (2)</div>
<svg class="a" style="left:2836.40px;top:970.00px;width:17.60px;height:9.60px;" viewBox="0 0 10 5" preserveAspectRatio="none"><path fill="#202124" d="M0 0H10L5 5Z"/></svg>
<div class="t" style="left:2412.00px;top:1050px;font-size:30px;line-height:30px;color:#1f1f1f;letter-spacing:-0.050px;-webkit-text-stroke:0.5px #1f1f1f;">Locations</div>
<svg class="a" style="left:2839.10px;top:1041.60px;width:48.40px;height:48.40px" viewBox="0 0 24 24"><path fill="#1f1f1f" d="M16.59 8.59L12 13.17 7.41 8.59 6 10l6 6 6-6z"/></svg>
<div class="t" style="left:2412.00px;top:1100px;font-size:25.6px;line-height:25.6px;color:#5f6368;letter-spacing:-0.217px;">Filter by location data like region and</div>
<div class="t" style="left:2412.00px;top:1136px;font-size:25.6px;line-height:25.6px;color:#5f6368;letter-spacing:-0.914px;">zone.</div>
<div class="t" style="left:2412.00px;top:1224px;font-size:30px;line-height:30px;color:#1f1f1f;letter-spacing:-0.885px;-webkit-text-stroke:0.5px #1f1f1f;">Labels</div>
<svg class="a" style="left:2502.32px;top:1223.92px;width:32.16px;height:32.16px" viewBox="0 0 24 24"><path fill="#5f6368" d="M11 18h2v-2h-2v2zm1-16C6.48 2 2 6.48 2 12s4.48 10 10 10 10-4.48 10-10S17.52 2 12 2zm0 18c-4.41 0-8-3.59-8-8s3.59-8 8-8 8 3.59 8 8-3.59 8-8 8zm0-14c-2.21 0-4 1.79-4 4h2c0-1.1.9-2 2-2s2 .9 2 2c0 2-3 1.75-3 5h2c0-2.25 3-2.5 3-5 0-2.21-1.79-4-4-4z"/></svg>
<svg class="a" style="left:2839.10px;top:1215.00px;width:48.40px;height:48.40px" viewBox="0 0 24 24"><path fill="#1f1f1f" d="M16.59 8.59L12 13.17 7.41 8.59 6 10l6 6 6-6z"/></svg>
<div class="t" style="left:2412.00px;top:1279px;font-size:21.7px;line-height:21.7px;color:#5f6368;letter-spacing:-0.167px;">Select the key and values of the labels you want</div>
<div class="t" style="left:2412.00px;top:1315px;font-size:21.7px;line-height:21.7px;color:#5f6368;letter-spacing:0.002px;">to filter.</div>
<div class="t" style="left:2412.00px;top:1378px;font-size:30px;line-height:30px;color:#1f1f1f;letter-spacing:-0.987px;-webkit-text-stroke:0.5px #1f1f1f;">Savings</div>
<svg class="a" style="left:2525.92px;top:1377.72px;width:32.16px;height:32.16px" viewBox="0 0 24 24"><path fill="#5f6368" d="M11 18h2v-2h-2v2zm1-16C6.48 2 2 6.48 2 12s4.48 10 10 10 10-4.48 10-10S17.52 2 12 2zm0 18c-4.41 0-8-3.59-8-8s3.59-8 8-8 8 3.59 8 8-3.59 8-8 8zm0-14c-2.21 0-4 1.79-4 4h2c0-1.1.9-2 2-2s2 .9 2 2c0 2-3 1.75-3 5h2c0-2.25 3-2.5 3-5 0-2.21-1.79-4-4-4z"/></svg>
<div class="a" style="left:2420.20px;top:1426.20px;width:32.50px;height:32.00px;background:#0d63dd;border-radius:4px;"></div>
<svg class="a" style="left:2420.20px;top:1426.20px;width:32.50px;height:32.00px;" viewBox="0 0 32.5 32" preserveAspectRatio="none"><path d="M3.9 17.9 L11.9 25.6 L28.6 8.8" fill="none" stroke="#fff" stroke-width="3.9"/></svg>
<div class="t" style="left:2469.60px;top:1429px;font-size:25.9px;line-height:25.9px;color:#1f1f1f;letter-spacing:-0.544px;">Savings programs</div>
<svg class="a" style="left:2691.12px;top:1425.92px;width:32.16px;height:32.16px" viewBox="0 0 24 24"><path fill="#5f6368" d="M11 18h2v-2h-2v2zm1-16C6.48 2 2 6.48 2 12s4.48 10 10 10 10-4.48 10-10S17.52 2 12 2zm0 18c-4.41 0-8-3.59-8-8s3.59-8 8-8 8 3.59 8 8-3.59 8-8 8zm0-14c-2.21 0-4 1.79-4 4h2c0-1.1.9-2 2-2s2 .9 2 2c0 2-3 1.75-3 5h2c0-2.25 3-2.5 3-5 0-2.21-1.79-4-4-4z"/></svg>
<svg class="a" style="left:2839.10px;top:1421.50px;width:48.40px;height:48.40px" viewBox="0 0 24 24"><path fill="#3c4043" d="M12 8l-6 6 1.41 1.41L12 10.83l4.59 4.58L18 14z"/></svg>
<div class="a" style="left:2478.00px;top:1482.50px;width:32.50px;height:32.00px;background:#0d63dd;border-radius:4px;"></div>
<svg class="a" style="left:2478.00px;top:1482.50px;width:32.50px;height:32.00px;" viewBox="0 0 32.5 32" preserveAspectRatio="none"><path d="M3.9 17.9 L11.9 25.6 L28.6 8.8" fill="none" stroke="#fff" stroke-width="3.9"/></svg>
<div class="t" style="left:2527.10px;top:1485px;font-size:25.9px;line-height:25.9px;color:#1f1f1f;letter-spacing:-1.259px;">Spend-based CUD</div>
<div class="t" style="left:2527.10px;top:1521px;font-size:25.9px;line-height:25.9px;color:#1f1f1f;letter-spacing:-0.141px;">discounts</div>
<svg class="a" style="left:2846.92px;top:1499.02px;width:32.16px;height:32.16px" viewBox="0 0 24 24"><path fill="#5f6368" d="M11 18h2v-2h-2v2zm1-16C6.48 2 2 6.48 2 12s4.48 10 10 10 10-4.48 10-10S17.52 2 12 2zm0 18c-4.41 0-8-3.59-8-8s3.59-8 8-8 8 3.59 8 8-3.59 8-8 8zm0-14c-2.21 0-4 1.79-4 4h2c0-1.1.9-2 2-2s2 .9 2 2c0 2-3 1.75-3 5h2c0-2.25 3-2.5 3-5 0-2.21-1.79-4-4-4z"/></svg>
<div class="a" style="left:2478.00px;top:1575.50px;width:32.50px;height:32.00px;background:#0d63dd;border-radius:4px;"></div>
<svg class="a" style="left:2478.00px;top:1575.50px;width:32.50px;height:32.00px;" viewBox="0 0 32.5 32" preserveAspectRatio="none"><path d="M3.9 17.9 L11.9 25.6 L28.6 8.8" fill="none" stroke="#fff" stroke-width="3.9"/></svg>
<div class="t" style="left:2527.20px;top:1578px;font-size:25.9px;line-height:25.9px;color:#1f1f1f;letter-spacing:-0.943px;">Legacy spend-based CUD</div>
<div class="t" style="left:2527.20px;top:1614px;font-size:25.9px;line-height:25.9px;color:#1f1f1f;letter-spacing:-0.279px;">credits</div>
<svg class="a" style="left:2846.72px;top:1593.02px;width:32.16px;height:32.16px" viewBox="0 0 24 24"><path fill="#5f6368" d="M11 18h2v-2h-2v2zm1-16C6.48 2 2 6.48 2 12s4.48 10 10 10 10-4.48 10-10S17.52 2 12 2zm0 18c-4.41 0-8-3.59-8-8s3.59-8 8-8 8 3.59 8 8-3.59 8-8 8zm0-14c-2.21 0-4 1.79-4 4h2c0-1.1.9-2 2-2s2 .9 2 2c0 2-3 1.75-3 5h2c0-2.25 3-2.5 3-5 0-2.21-1.79-4-4-4z"/></svg>
<div class="a" style="left:2420.20px;top:1671.00px;width:32.50px;height:32.00px;background:#0d63dd;border-radius:4px;"></div>
<svg class="a" style="left:2420.20px;top:1671.00px;width:32.50px;height:32.00px;" viewBox="0 0 32.5 32" preserveAspectRatio="none"><path d="M3.9 17.9 L11.9 25.6 L28.6 8.8" fill="none" stroke="#fff" stroke-width="3.9"/></svg>
<div class="t" style="left:2469.70px;top:1674px;font-size:25.9px;line-height:25.9px;color:#1f1f1f;letter-spacing:-0.650px;">Other savings</div>
<svg class="a" style="left:2642.92px;top:1670.92px;width:32.16px;height:32.16px" viewBox="0 0 24 24"><path fill="#5f6368" d="M11 18h2v-2h-2v2zm1-16C6.48 2 2 6.48 2 12s4.48 10 10 10 10-4.48 10-10S17.52 2 12 2zm0 18c-4.41 0-8-3.59-8-8s3.59-8 8-8 8 3.59 8 8-3.59 8-8 8zm0-14c-2.21 0-4 1.79-4 4h2c0-1.1.9-2 2-2s2 .9 2 2c0 2-3 1.75-3 5h2c0-2.25 3-2.5 3-5 0-2.21-1.79-4-4-4z"/></svg>
<svg class="a" style="left:2839.10px;top:1666.80px;width:48.40px;height:48.40px" viewBox="0 0 24 24"><path fill="#3c4043" d="M12 8l-6 6 1.41 1.41L12 10.83l4.59 4.58L18 14z"/></svg>
<div class="a" style="left:2478.00px;top:1726.30px;width:32.50px;height:32.00px;background:#0d63dd;border-radius:4px;"></div>
<svg class="a" style="left:2478.00px;top:1726.30px;width:32.50px;height:32.00px;" viewBox="0 0 32.5 32" preserveAspectRatio="none"><path d="M3.9 17.9 L11.9 25.6 L28.6 8.8" fill="none" stroke="#fff" stroke-width="3.9"/></svg>
<div class="t" style="left:2527.20px;top:1730px;font-size:25.9px;line-height:25.9px;color:#1f1f1f;letter-spacing:-0.184px;">Promotional credits</div>
<svg class="a" style="left:2766.92px;top:1726.12px;width:32.16px;height:32.16px" viewBox="0 0 24 24"><path fill="#5f6368" d="M11 18h2v-2h-2v2zm1-16C6.48 2 2 6.48 2 12s4.48 10 10 10 10-4.48 10-10S17.52 2 12 2zm0 18c-4.41 0-8-3.59-8-8s3.59-8 8-8 8 3.59 8 8-3.59 8-8 8zm0-14c-2.21 0-4 1.79-4 4h2c0-1.1.9-2 2-2s2 .9 2 2c0 2-3 1.75-3 5h2c0-2.25 3-2.5 3-5 0-2.21-1.79-4-4-4z"/></svg>
<div class="a" style="left:2478.00px;top:1784.20px;width:32.50px;height:32.00px;background:#0d63dd;border-radius:4px;"></div>
<svg class="a" style="left:2478.00px;top:1784.20px;width:32.50px;height:32.00px;" viewBox="0 0 32.5 32" preserveAspectRatio="none"><path d="M3.9 17.9 L11.9 25.6 L28.6 8.8" fill="none" stroke="#fff" stroke-width="3.9"/></svg>
<div class="t" style="left:2527.20px;top:1787px;font-size:25.9px;line-height:25.9px;color:#1f1f1f;letter-spacing:-0.384px;">Sustained use discounts</div>
<div class="t" style="left:2527.20px;top:1823px;font-size:25.9px;line-height:25.9px;color:#1f1f1f;letter-spacing:-1.657px;">(SUDs)</div>
<svg class="a" style="left:2846.72px;top:1801.82px;width:32.16px;height:32.16px" viewBox="0 0 24 24"><path fill="#5f6368" d="M11 18h2v-2h-2v2zm1-16C6.48 2 2 6.48 2 12s4.48 10 10 10 10-4.48 10-10S17.52 2 12 2zm0 18c-4.41 0-8-3.59-8-8s3.59-8 8-8 8 3.59 8 8-3.59 8-8 8zm0-14c-2.21 0-4 1.79-4 4h2c0-1.1.9-2 2-2s2 .9 2 2c0 2-3 1.75-3 5h2c0-2.25 3-2.5 3-5 0-2.21-1.79-4-4-4z"/></svg>
<div class="a" style="left:2478.00px;top:1877.50px;width:32.50px;height:32.00px;background:#0d63dd;border-radius:4px;"></div>
<svg class="a" style="left:2478.00px;top:1877.50px;width:32.50px;height:32.00px;" viewBox="0 0 32.5 32" preserveAspectRatio="none"><path d="M3.9 17.9 L11.9 25.6 L28.6 8.8" fill="none" stroke="#fff" stroke-width="3.9"/></svg>
<div class="t" style="left:2527.20px;top:1881px;font-size:25.9px;line-height:25.9px;color:#1f1f1f;letter-spacing:-0.474px;">Spending-based discounts</div>
<svg class="a" style="left:2842.92px;top:1876.92px;width:32.16px;height:32.16px" viewBox="0 0 24 24"><path fill="#5f6368" d="M11 18h2v-2h-2v2zm1-16C6.48 2 2 6.48 2 12s4.48 10 10 10 10-4.48 10-10S17.52 2 12 2zm0 18c-4.41 0-8-3.59-8-8s3.59-8 8-8 8 3.59 8 8-3.59 8-8 8zm0-14c-2.21 0-4 1.79-4 4h2c0-1.1.9-2 2-2s2 .9 2 2c0 2-3 1.75-3 5h2c0-2.25 3-2.5 3-5 0-2.21-1.79-4-4-4z"/></svg>
<div class="a" style="left:2411.00px;top:1976.50px;width:474.00px;height:1.80px;background:#dadce0;"></div>
<div class="t" style="left:2412.40px;top:2020px;font-size:30px;line-height:30px;color:#1f1f1f;letter-spacing:-0.241px;-webkit-text-stroke:0.5px #1f1f1f;">Invoice level charges</div>
<div class="a" style="left:2420.20px;top:2066.50px;width:32.50px;height:32.00px;background:#0d63dd;border-radius:4px;"></div>
<svg class="a" style="left:2420.20px;top:2066.50px;width:32.50px;height:32.00px;" viewBox="0 0 32.5 32" preserveAspectRatio="none"><path d="M3.9 17.9 L11.9 25.6 L28.6 8.8" fill="none" stroke="#fff" stroke-width="3.9"/></svg>
<div class="t" style="left:2469.40px;top:2069px;font-size:25.9px;line-height:25.9px;color:#1f1f1f;letter-spacing:-1.137px;">Tax</div>
<div class="a" style="left:2420.20px;top:2117.00px;width:32.50px;height:32.00px;background:#0d63dd;border-radius:4px;"></div>
<svg class="a" style="left:2420.20px;top:2117.00px;width:32.50px;height:32.00px;" viewBox="0 0 32.5 32" preserveAspectRatio="none"><path d="M3.9 17.9 L11.9 25.6 L28.6 8.8" fill="none" stroke="#fff" stroke-width="3.9"/></svg>
<div class="t" style="left:2469.40px;top:2120px;font-size:25.9px;line-height:25.9px;color:#1f1f1f;letter-spacing:-0.191px;">Adjustments</div>
<svg class="a" style="left:2630.72px;top:2116.62px;width:32.16px;height:32.16px" viewBox="0 0 24 24"><path fill="#5f6368" d="M11 18h2v-2h-2v2zm1-16C6.48 2 2 6.48 2 12s4.48 10 10 10 10-4.48 10-10S17.52 2 12 2zm0 18c-4.41 0-8-3.59-8-8s3.59-8 8-8 8 3.59 8 8-3.59 8-8 8zm0-14c-2.21 0-4 1.79-4 4h2c0-1.1.9-2 2-2s2 .9 2 2c0 2-3 1.75-3 5h2c0-2.25 3-2.5 3-5 0-2.21-1.79-4-4-4z"/></svg>
<div class="a" style="left:2411.00px;top:2187.00px;width:112.50px;height:56.70px;border:1.5px solid #6d94d8;border-radius:8px;"></div>
<div class="t" style="left:2435.00px;top:2202px;font-size:26px;line-height:26px;color:#0b5cd9;letter-spacing:-0.731px;-webkit-text-stroke:0.45px #0b5cd9;">Reset</div>
<div class="a" style="left:2385.00px;top:110.00px;width:526.00px;height:148.00px;border:8px solid #ff0000;"></div>
<div class="a" style="left:2385.00px;top:2004.00px;width:526.00px;height:166.00px;border:8px solid #ff0000;"></div>
<svg class="a" style="left:0;top:0;width:2956px;height:2405px;pointer-events:none" viewBox="0 0 2956 2405"><path d="M2649 241 L2670.4 386.6 L2653.3 360 L2653.3 2006 L2644.6 2006 L2644.6 360 L2627.8 386.6 Z" fill="#ff0000"/></svg></body></html>
